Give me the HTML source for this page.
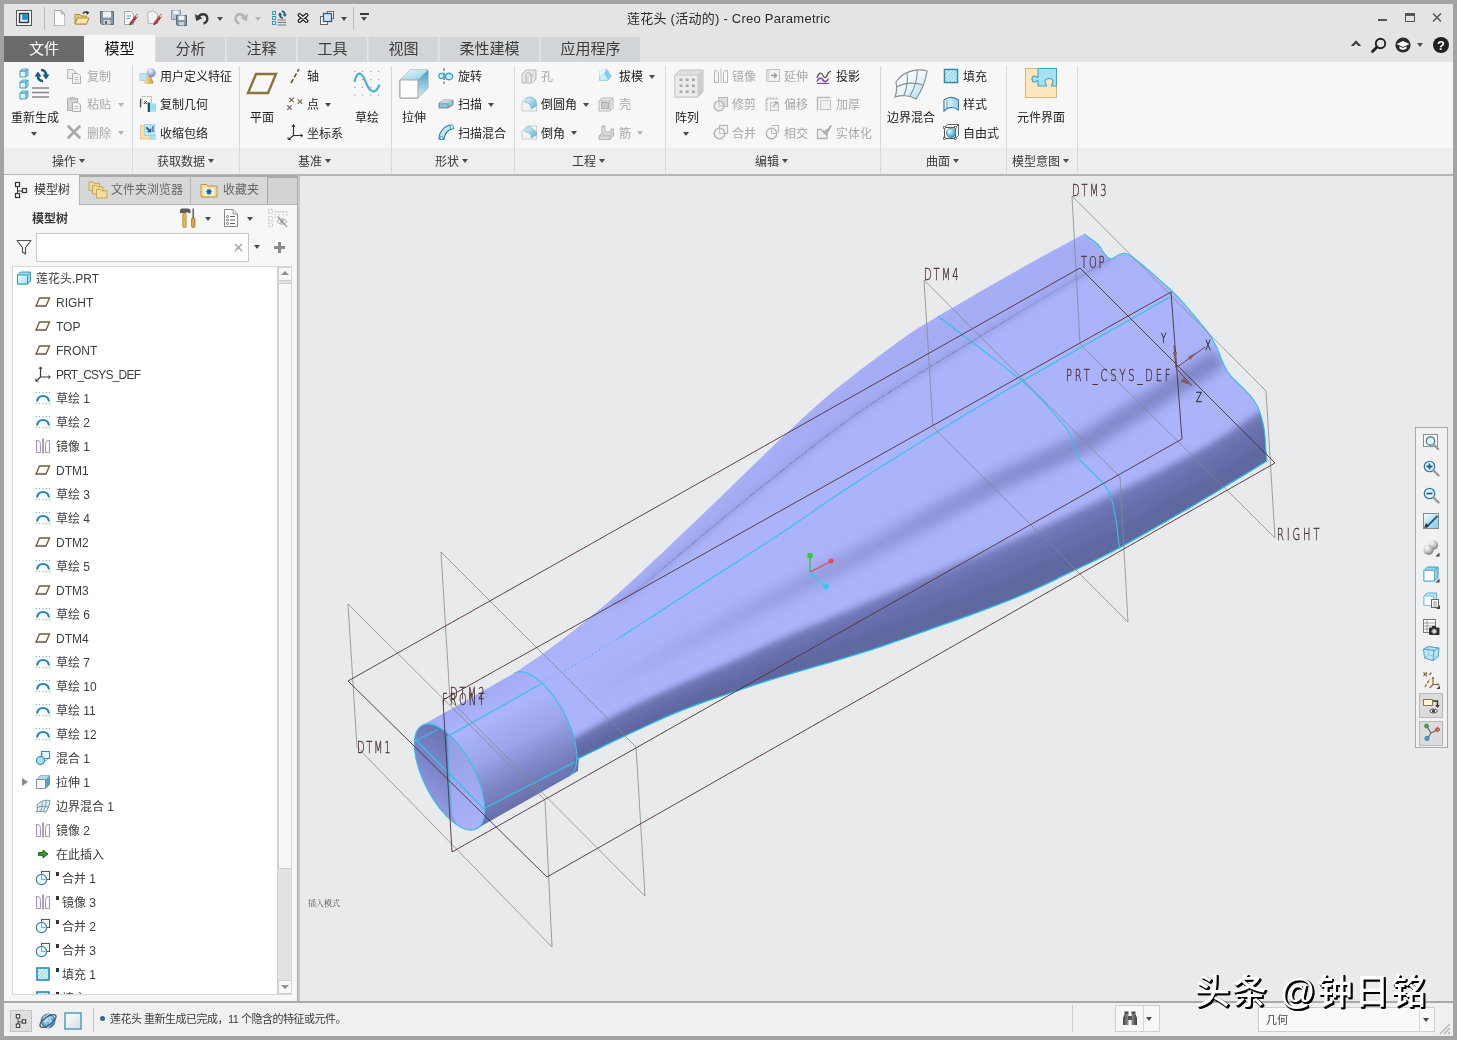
<!DOCTYPE html><html lang="zh"><head><meta charset="utf-8"><title>莲花头 (活动的) - Creo Parametric</title><style>
*{box-sizing:border-box;margin:0;padding:0}
html,body{width:1457px;height:1040px;overflow:hidden;background:#a3a3a3}
#root{position:absolute;left:0;top:0;width:1457px;height:1040px;will-change:transform}
body{font-family:"Liberation Sans","Noto Sans CJK SC",sans-serif;font-size:12px;color:#1e1e1e;position:relative}
.abs,.t,.i{position:absolute}
.t{white-space:nowrap;line-height:16px;height:16px}
.dis{color:#a9a9a9}
.i svg{display:block}
#title{left:4px;top:4px;width:1449px;height:58px;background:#e4e4e4}
#ribbon{left:4px;top:62px;width:1449px;height:113px;background:#f7f7f7}
#riblab{left:4px;top:148px;width:1449px;height:26px;background:#eeeeef}
.sep{position:absolute;width:1px;background:#d9d9d9}
.tab{position:absolute;top:37px;height:25px;font-size:15px;line-height:24px;text-align:center;color:#3c3c3c;background:#d2d5d8}
.arr{position:absolute;width:0;height:0;border-left:3.500px solid transparent;border-right:3.500px solid transparent;border-top:4px solid #4a4a4a}
.arr.d{border-top-color:#b5b5b5}
#left{left:4px;top:175px;width:294px;height:826px;background:#f7f7f8}
#gfx{left:300px;top:176px;width:1153px;height:825px;background:#e9eaec;overflow:hidden}
#status{left:4px;top:1003px;width:1449px;height:33px;background:#f0f0f0}
.tr{position:absolute;left:0;height:24px;line-height:24px;font-size:12px;color:#3d3d3d;white-space:nowrap}
</style></head><body><div id="root">
<div id="title" class="abs"></div>
<div class="t" style="left:627px;top:11px;font-size:13px;letter-spacing:.25px;color:#2a2a2a">莲花头 (活动的) - Creo Parametric</div>
<div class="i" style="left:16px;top:10px;width:16px;height:16px;"><svg width="16" height="16" viewBox="0 0 16 16"><rect x=".5" y=".5" width="15" height="15" fill="#fff" stroke="#555"/><rect x="3.5" y="3.5" width="9" height="9" fill="#d8ecf8" stroke="#333" stroke-width="1.4"/><rect x="6.2" y="4.2" width="5.6" height="5.6" fill="#1b8fd0"/></svg></div>
<div class="sep" style="left:44px;top:7px;height:23px;background:#bdbdbd"></div>
<div class="i" style="left:51px;top:10px;width:16px;height:16px;"><svg width="16" height="16" viewBox="0 0 16 16"><path d="M3.5 .5H10L13.5 4V15.5H3.5Z" fill="#fcfcfc" stroke="#a9a9a9"/><path d="M10 .5V4H13.5Z" fill="#d0d0d0" stroke="#a0a0a0" stroke-width=".7"/><path d="M13.5 6V15.5H6" stroke="#c4c4c4" fill="none"/></svg></div>
<div class="i" style="left:74px;top:10px;width:16px;height:16px;"><svg width="16" height="16" viewBox="0 0 16 16"><path d="M1 4.5H6L7.5 6H12.5V14H1Z" fill="#e7c476" stroke="#b58e3b"/><path d="M3.5 8H15L12.5 14H1Z" fill="#f8e3a8" stroke="#b58e3b"/><path d="M9 3.5C10.5 1.5 12.5 1.5 13.5 3" stroke="#333" stroke-width="1.4" fill="none"/><path d="M12 1L15.5 2.2L13 5Z" fill="#333"/></svg></div>
<div class="i" style="left:99px;top:10px;width:16px;height:16px;"><svg width="16" height="16" viewBox="0 0 16 16"><path d="M1.5 1.5H14.5V14.5H3L1.5 13Z" fill="#8697a3" stroke="#5a6a76"/><rect x="4" y="1.5" width="8" height="6" fill="#eef2f5"/><rect x="4.5" y="10" width="7" height="4.5" fill="#c9d2d8"/><rect x="6" y="11" width="2" height="3" fill="#5a6a76"/></svg></div>
<div class="i" style="left:122px;top:10px;width:16px;height:16px;"><svg width="16" height="16" viewBox="0 0 16 16"><path d="M2.5 1.5H9L11.5 4V14.5H2.5Z" fill="#fafafa" stroke="#a9a9a9"/><path d="M4.5 6H9M4.5 8.5H8" stroke="#4aa3c7"/><path d="M15 4L8.5 12L7.5 15L10.5 13.5L16 6Z" fill="#b5443a" stroke="#7d2c25" stroke-width=".6"/><path d="M15 4L16 6L14.5 7.5L13.5 5.8Z" fill="#d9d9d9"/></svg></div>
<div class="i" style="left:146px;top:10px;width:16px;height:16px;"><svg width="16" height="16" viewBox="0 0 16 16"><path d="M1.5 2.5L7 1L11.5 4V13.5H2.5Z" fill="#f4f4f4" stroke="#b5b5b5"/><path d="M15 4L8.5 12L7.5 15L10.5 13.5L16 6Z" fill="#b5443a" stroke="#7d2c25" stroke-width=".6"/><path d="M15 4L16 6L14.5 7.5L13.5 5.8Z" fill="#d9d9d9"/></svg></div>
<div class="i" style="left:171px;top:10px;width:16px;height:16px;"><svg width="16" height="16" viewBox="0 0 16 16"><path d="M.5 .5H9.5V9.5H.5Z" fill="#b9c3ca" stroke="#8c99a3"/><rect x="2.5" y=".5" width="5" height="3.5" fill="#f1f4f6"/><path d="M5.5 5.5H15.5V15.5H6.5L5.5 14.5Z" fill="#8697a3" stroke="#5a6a76"/><rect x="7.5" y="5.5" width="6" height="4.5" fill="#eef2f5"/><rect x="8" y="12" width="5" height="3.5" fill="#c9d2d8"/></svg></div>
<div class="i" style="left:194px;top:10px;width:16px;height:16px;"><svg width="16" height="16" viewBox="0 0 16 16"><path d="M4.5 7.5C6 3.5 12 3 13.2 7.5C14 10.5 12 13 9.5 13.5" stroke="#3a3a3a" stroke-width="2.4" fill="none"/><path d="M1 4L2.2 11L8.5 8.2Z" fill="#3a3a3a"/></svg></div>
<div class="arr" style="left:217px;top:17px"></div>
<div class="i" style="left:233px;top:10px;width:16px;height:16px;"><svg width="16" height="16" viewBox="0 0 16 16"><path d="M11.5 7.5C10 3.5 4 3 2.8 7.5C2 10.5 4 13 6.5 13.5" stroke="#b4b4b4" stroke-width="2.4" fill="none"/><path d="M15 4L13.8 11L7.5 8.2Z" fill="#b4b4b4"/></svg></div>
<div class="arr d" style="left:255px;top:17px"></div>
<div class="i" style="left:271px;top:10px;width:16px;height:16px;"><svg width="16" height="16" viewBox="0 0 16 16"><rect x="1.500" y="1.500" width="3" height="3" fill="#d6eef8" stroke="#3a9cc4"/><rect x="1.500" y="6.500" width="3" height="3" fill="#d6eef8" stroke="#3a9cc4"/><rect x="1.500" y="11.500" width="3" height="3" fill="#d6eef8" stroke="#3a9cc4"/><path d="M6.500 10H15M6.500 12.500H15M6.500 15H15" stroke="#777"/><g transform="translate(6 .2) scale(.6)" fill="#1b5a7c"><path d="M1.500 8.400H8.500L5 3.600Z"/><path d="M9.500 6.600H16.500L13 11.400Z"/><path d="M5 8A4.600 4.600 0 0 0 10 13" fill="none" stroke="#1b5a7c" stroke-width="2.800"/><path d="M13 7A4.600 4.600 0 0 0 8 2" fill="none" stroke="#1b5a7c" stroke-width="2.800"/></g></svg></div>
<div class="i" style="left:295px;top:10px;width:16px;height:16px;"><svg width="16" height="16" viewBox="0 0 16 16"><g stroke-linecap="round"><path d="M4.500 5L11.500 11M11.500 5L4.500 11" stroke="#1e1e1e" stroke-width="4"/><path d="M4.500 5L11.500 11M11.500 5L4.500 11" stroke="#fff" stroke-width="1.600"/></g></svg></div>
<div class="i" style="left:319px;top:10px;width:16px;height:16px;"><svg width="16" height="16" viewBox="0 0 16 16"><rect x="1.5" y="6.5" width="7" height="8" fill="#fff" stroke="#666"/><rect x="8.5" y="1.5" width="6" height="7" fill="#fff" stroke="#666"/><rect x="4.5" y="3.5" width="8" height="8" fill="#cfe6f2" stroke="#355f78" stroke-width="1.3"/></svg></div>
<div class="arr" style="left:341px;top:17px"></div>
<div class="sep" style="left:353px;top:7px;height:23px;background:#bdbdbd"></div>
<div class="abs" style="left:360px;top:13px;width:9px;height:2px;background:#3a3a3a"></div>
<div class="arr" style="left:360.5px;top:17px"></div>
<div class="abs" style="left:1378px;top:19px;width:9px;height:2px;background:#555"></div>
<div class="abs" style="left:1405px;top:13px;width:10px;height:9px;border:1px solid #555;border-top-width:3px"></div>
<svg class="abs" style="left:1432px;top:12px" width="11" height="11"><path d="M1 1.500L9 9.500M9 1.500L1 9.500" stroke="#555" stroke-width="1.500"/></svg>
<div class="i" style="left:1350px;top:37px;width:12px;height:12px;"><svg width="12" height="12" viewBox="0 0 12 12"><path d="M.8 9L6 3.200L11.200 9H8.300L6 6.400L3.700 9Z" fill="#3a3a3a"/></svg></div>
<div class="i" style="left:1370px;top:36px;width:18px;height:18px;"><svg width="18" height="18" viewBox="0 0 18 18"><circle cx="10.500" cy="7.500" r="4.700" fill="#e6e6e6" stroke="#222" stroke-width="1.900"/><path d="M7 11L2.5 15.5" stroke="#222" stroke-width="2.8" stroke-linecap="round"/></svg></div>
<div class="i" style="left:1394px;top:36px;width:18px;height:18px;"><svg width="18" height="18" viewBox="0 0 18 18"><circle cx="9" cy="9" r="7.6" fill="#2b2b2b"/><path d="M2.5 8L9 5L15.5 8L9 11Z" fill="#fff"/><path d="M5.5 10.2V12.5C7.5 14.2 10.5 14.2 12.5 12.5V10.2L9 12Z" fill="#fff"/></svg></div>
<div class="arr" style="left:1417px;top:43px"></div>
<div class="i" style="left:1432px;top:36px;width:18px;height:18px;"><svg width="18" height="18" viewBox="0 0 18 18"><circle cx="9" cy="9" r="8" fill="#1f1f1f"/><text x="9" y="13.6" font-family="Liberation Sans,sans-serif" font-size="13" font-weight="bold" fill="#fff" text-anchor="middle">?</text></svg></div>
<div class="tab" style="left:4px;width:80px;background:#6b6b6b;color:#fff;top:36px;height:26px;line-height:26px">文件</div>
<div class="tab" style="left:84px;width:71px;background:#f7f7f7;color:#111;top:35px;height:28px;line-height:27px">模型</div>
<div class="tab" style="left:155px;width:70px;border-left:1px solid #dcdee0">分析</div>
<div class="tab" style="left:226px;width:70px;border-left:1px solid #dcdee0">注释</div>
<div class="tab" style="left:297px;width:70px;border-left:1px solid #dcdee0">工具</div>
<div class="tab" style="left:368px;width:70px;border-left:1px solid #dcdee0">视图</div>
<div class="tab" style="left:439px;width:100px;border-left:1px solid #dcdee0">柔性建模</div>
<div class="tab" style="left:540px;width:100px;border-left:1px solid #dcdee0">应用程序</div>
<div id="ribbon" class="abs"></div><div id="riblab" class="abs"></div>
<div class="sep" style="left:132px;top:66px;height:107px"></div>
<div class="sep" style="left:239px;top:66px;height:107px"></div>
<div class="sep" style="left:391px;top:66px;height:107px"></div>
<div class="sep" style="left:514px;top:66px;height:107px"></div>
<div class="sep" style="left:665px;top:66px;height:107px"></div>
<div class="sep" style="left:880px;top:66px;height:107px"></div>
<div class="sep" style="left:1006px;top:66px;height:107px"></div>
<div class="sep" style="left:1077px;top:66px;height:107px"></div>
<div class="t " style="left:52px;top:154px;color:#3a3a3a">操作</div>
<div class="arr" style="left:78.5px;top:159px"></div>
<div class="t " style="left:157px;top:154px;color:#3a3a3a">获取数据</div>
<div class="arr" style="left:207.5px;top:159px"></div>
<div class="t " style="left:298px;top:154px;color:#3a3a3a">基准</div>
<div class="arr" style="left:324.5px;top:159px"></div>
<div class="t " style="left:435px;top:154px;color:#3a3a3a">形状</div>
<div class="arr" style="left:461.5px;top:159px"></div>
<div class="t " style="left:572px;top:154px;color:#3a3a3a">工程</div>
<div class="arr" style="left:598.5px;top:159px"></div>
<div class="t " style="left:755px;top:154px;color:#3a3a3a">编辑</div>
<div class="arr" style="left:781.5px;top:159px"></div>
<div class="t " style="left:926px;top:154px;color:#3a3a3a">曲面</div>
<div class="arr" style="left:952.5px;top:159px"></div>
<div class="t " style="left:1012px;top:154px;color:#3a3a3a">模型意图</div>
<div class="arr" style="left:1062.5px;top:159px"></div>
<div class="i" style="left:17px;top:66px;width:40px;height:36px;"><svg width="40" height="36" viewBox="0 0 40 36"><path d="M3 5h6v6h-6z" fill="#e8f6fc" stroke="#3a9cc4"/><path d="M3 5l2-2h6l-2 2zM9 5l2-2v6l-2 2z" fill="#9fd8ee" stroke="#3a9cc4" stroke-width=".8"/><path d="M3 16h6v6h-6z" fill="#e8f6fc" stroke="#3a9cc4"/><path d="M3 16l2-2h6l-2 2zM9 16l2-2v6l-2 2z" fill="#9fd8ee" stroke="#3a9cc4" stroke-width=".8"/><path d="M3 27h6v6h-6z" fill="#e8f6fc" stroke="#3a9cc4"/><path d="M3 27l2-2h6l-2 2zM9 27l2-2v6l-2 2z" fill="#9fd8ee" stroke="#3a9cc4" stroke-width=".8"/><path d="M15 22H32M15 26.5H32M15 31H32" stroke="#888" stroke-width="1.6"/><g transform="translate(16 2)" fill="#1b5a7c"><path d="M1.500 8.400H8.500L5 3.600Z"/><path d="M9.500 6.600H16.500L13 11.400Z"/><path d="M5 8A4.600 4.600 0 0 0 10 13" fill="none" stroke="#1b5a7c" stroke-width="2.600"/><path d="M13 7A4.600 4.600 0 0 0 8 2" fill="none" stroke="#1b5a7c" stroke-width="2.600"/></g></svg></div>
<div class="t " style="left:11px;top:110px;">重新生成</div>
<div class="arr" style="left:31px;top:132px"></div>
<div class="i" style="left:66px;top:68px;width:16px;height:16px;"><svg width="16" height="16" viewBox="0 0 16 16"><path d="M1.5 1.5H7L9.5 4V10.5H1.5Z" fill="#ededed" stroke="#b5b5b5"/><path d="M6.5 5.5H12L14.5 8V15.5H6.5Z" fill="#f4f4f4" stroke="#b0b0b0"/><path d="M8.5 9.5H12.5M8.5 11.5H12.5M8.5 13.5H12.5" stroke="#c4c4c4"/></svg></div>
<div class="t dis" style="left:87px;top:69px;">复制</div>
<div class="i" style="left:66px;top:96px;width:16px;height:16px;"><svg width="16" height="16" viewBox="0 0 16 16"><rect x="1.5" y="2.5" width="10" height="12" fill="#d4d4d4" stroke="#b0b0b0"/><rect x="4" y="1" width="5" height="3" fill="#c2c2c2"/><path d="M6.5 6.5H12L14.5 9V15.5H6.5Z" fill="#f4f4f4" stroke="#b0b0b0"/><path d="M8.5 10.5H12.5M8.5 12.5H12.5" stroke="#c4c4c4"/></svg></div>
<div class="t dis" style="left:87px;top:97px;">粘贴</div>
<div class="arr d" style="left:118px;top:103px"></div>
<div class="i" style="left:66px;top:124px;width:16px;height:16px;"><svg width="16" height="16" viewBox="0 0 16 16"><path d="M2.5 2.5L13.5 13.5M13.5 2.5L2.5 13.5" stroke="#a8a8a8" stroke-width="2.6" stroke-linecap="round"/></svg></div>
<div class="t dis" style="left:87px;top:126px;">删除</div>
<div class="arr d" style="left:118px;top:131px"></div>
<div class="i" style="left:139px;top:68px;width:17px;height:16px;"><svg width="17" height="16" viewBox="0 0 17 16"><defs><radialGradient id="gs" cx=".4" cy=".3" r=".75"><stop offset="0" stop-color="#f4f6fc"/><stop offset=".55" stop-color="#a9b3d8"/><stop offset="1" stop-color="#6f7fb5"/></radialGradient><linearGradient id="gcone" x1="0" y1="0" x2="1" y2="0"><stop offset="0" stop-color="#f2dc9a"/><stop offset=".5" stop-color="#e3c470"/><stop offset="1" stop-color="#b8923e"/></linearGradient></defs><rect x="1" y="5.700" width="6.500" height="6.800" fill="#bfe6f7" stroke="#8fd0ee" stroke-width=".8"/><path d="M4.600 15C6.500 12 8.500 9 9.600 5.500H11.400C12.500 9 13.500 12 14.600 15C12 16.300 7 16.300 4.600 15Z" fill="url(#gcone)"/><circle cx="12.200" cy="4.700" r="4.500" fill="url(#gs)"/></svg></div>
<div class="t " style="left:160px;top:69px;">用户定义特征</div>
<div class="i" style="left:139px;top:96px;width:17px;height:16px;"><svg width="17" height="16" viewBox="0 0 17 16"><rect x="3" y=".5" width="9.500" height="6.500" fill="#fbfbfb" stroke="#b9b9b9" stroke-width=".8"/><rect x=".9" y="2.800" width="1.300" height="8.600" fill="#4a4a4a"/><path d="M5.200 5.300l2.600 2.600m0-2.600l-2.600 2.600" stroke="#333" stroke-width="1"/><rect x="11" y="7.500" width="6" height="8.200" fill="#9fdcf2"/><rect x="8.700" y="6.700" width="2.300" height="9.300" fill="#0e5a63"/></svg></div>
<div class="t " style="left:160px;top:97px;">复制几何</div>
<div class="i" style="left:139px;top:124px;width:17px;height:16px;"><svg width="17" height="16" viewBox="0 0 17 16"><rect x="1.400" y="1.500" width="9.500" height="13.500" fill="#f9e3ac" stroke="#e0c079" stroke-width=".8"/><rect x="11" y="10.700" width="6" height="5.300" fill="#a9e0f4"/><rect x="5.300" y=".5" width="10.500" height="10.800" fill="#bfe8f7" stroke="#8fd0ea" stroke-width=".8"/><path d="M7.300 3.300L11.200 7.200" stroke="#1d5c85" stroke-width="1.700"/><path d="M12.300 4V8.300H8Z" fill="#1d5c85"/><rect x="13.300" y="2" width="1.300" height="6" fill="#2a6f96"/></svg></div>
<div class="t " style="left:160px;top:126px;">收缩包络</div>
<div class="i" style="left:246px;top:68px;width:32px;height:30px;"><svg width="32" height="30" viewBox="0 0 32 30"><path d="M10 6H30L22 25H2Z" fill="none" stroke="#8d7438" stroke-width="2.400" stroke-linejoin="miter"/></svg></div>
<div class="t " style="left:250px;top:110px;">平面</div>
<div class="i" style="left:287px;top:68px;width:16px;height:16px;"><svg width="16" height="16" viewBox="0 0 16 16"><path d="M4 15L12 1" stroke="#6b5530" stroke-width="1.6" stroke-dasharray="4.5 2"/></svg></div>
<div class="t " style="left:307px;top:69px;">轴</div>
<div class="i" style="left:287px;top:96px;width:16px;height:16px;"><svg width="16" height="16" viewBox="0 0 16 16"><path d="M2.4 1.7l4.400 4.400m0-4.400l-4.400 4.400" stroke="#7d6f5a" stroke-width="1.300" fill="none"/><path d="M10.7 3.4l4.400 4.400m0-4.400l-4.400 4.400" stroke="#7d6f5a" stroke-width="1.300" fill="none"/><path d="M0.3 9.4l4.400 4.400m0-4.400l-4.400 4.400" stroke="#7d6f5a" stroke-width="1.300" fill="none"/></svg></div>
<div class="t " style="left:307px;top:97px;">点</div>
<div class="arr" style="left:325px;top:103px"></div>
<div class="i" style="left:287px;top:124px;width:16px;height:16px;"><svg width="16" height="16" viewBox="0 0 16 16"><path d="M6.5 1V11.5H15.5M6.5 11.5L1.5 15.5" stroke="#333" stroke-width="1.2" fill="none"/><path d="M5 3L6.5 .5L8 3M13.5 10L15.8 11.5L13.5 13M1 13L1.2 15.8L4 15.5" stroke="#333" fill="none" stroke-width="1"/></svg></div>
<div class="t " style="left:307px;top:126px;">坐标系</div>
<div class="i" style="left:351px;top:66px;width:32px;height:34px;"><svg width="32" height="34" viewBox="0 0 32 34"><g fill="#8f8f8f"><rect x="3.3" y="4.8" width="1.100" height="1.100"/><rect x="3.3" y="13.1" width="1.100" height="1.100"/><rect x="3.3" y="20.8" width="1.100" height="1.100"/><rect x="3.3" y="28.5" width="1.100" height="1.100"/><rect x="11" y="4.8" width="1.100" height="1.100"/><rect x="11" y="13.1" width="1.100" height="1.100"/><rect x="11" y="20.8" width="1.100" height="1.100"/><rect x="11" y="28.5" width="1.100" height="1.100"/><rect x="19.3" y="4.8" width="1.100" height="1.100"/><rect x="19.3" y="13.1" width="1.100" height="1.100"/><rect x="19.3" y="20.8" width="1.100" height="1.100"/><rect x="19.3" y="28.5" width="1.100" height="1.100"/><rect x="27" y="4.8" width="1.100" height="1.100"/><rect x="27" y="13.1" width="1.100" height="1.100"/><rect x="27" y="20.8" width="1.100" height="1.100"/><rect x="27" y="28.5" width="1.100" height="1.100"/></g><path d="M3.500 16C6 5 10.500 5 14.500 15.500S24 30 28.500 18.500" stroke="#4fb0d2" stroke-width="2.200" fill="none"/></svg></div>
<div class="t " style="left:355px;top:110px;">草绘</div>
<div class="i" style="left:397px;top:67px;width:34px;height:36px;"><svg width="34" height="36" viewBox="0 0 34 36"><defs><linearGradient id="ge1" x1="0" y1="0" x2="1" y2="1"><stop offset="0" stop-color="#e8f6fb"/><stop offset="1" stop-color="#8fcde3"/></linearGradient><linearGradient id="ge2" x1="0" y1="0" x2="0" y2="1"><stop offset="0" stop-color="#3f9cc2"/><stop offset="1" stop-color="#d8eef6"/></linearGradient></defs><path d="M3 13L13 3H31V21L21 31H3Z" fill="#fff" stroke="#9c9c9c"/><path d="M3 13L13 3H31L21 13Z" fill="url(#ge1)"/><path d="M21 13L31 3V21L21 31Z" fill="url(#ge2)"/><path d="M3 13H21V31H3Z" fill="#fdfdfd" stroke="#a5a5a5"/><path d="M21 13L31 3" stroke="#7fb8cf"/></svg></div>
<div class="t " style="left:402px;top:110px;">拉伸</div>
<div class="i" style="left:438px;top:68px;width:16px;height:16px;"><svg width="16" height="16" viewBox="0 0 16 16"><path d="M6 0V16" stroke="#555" stroke-dasharray="3 1.5"/><ellipse cx="3.5" cy="8" rx="2.6" ry="2.6" fill="#d9f1f9" stroke="#3a9cc4" stroke-width="1.2"/><ellipse cx="11" cy="8.5" rx="3.6" ry="3.3" fill="#c8ebf7" stroke="#3a9cc4" stroke-width="1.4"/><path d="M6 8H8" stroke="#3a9cc4"/></svg></div>
<div class="t " style="left:458px;top:69px;">旋转</div>
<div class="i" style="left:438px;top:96px;width:16px;height:16px;"><svg width="16" height="16" viewBox="0 0 16 16"><path d="M1 7L6 4H15V9L10 12H1Z" fill="#8ea6ad" stroke="#6d858c" stroke-width=".8"/><path d="M1 7L6 4H15L10 7Z" fill="#c6d6da"/><path d="M2 8.5H9V11H2Z" fill="#7fd0ea"/><ellipse cx="12.5" cy="7.5" rx="1.8" ry="2.3" fill="#7fd0ea"/></svg></div>
<div class="t " style="left:458px;top:97px;">扫描</div>
<div class="arr" style="left:488px;top:103px"></div>
<div class="i" style="left:438px;top:124px;width:16px;height:16px;"><svg width="16" height="16" viewBox="0 0 16 16"><path d="M1 15C1 8 6 2 13 1L15.5 4.5C10 5.5 6.5 9.5 6 15.5Z" fill="#bfe6f5" stroke="#2f7fae" stroke-width="1.1"/><ellipse cx="13.8" cy="3" rx="1.6" ry="2.2" fill="#eaf7fc" stroke="#2f7fae" stroke-width=".8"/><circle cx="3.5" cy="14" r="1.6" fill="#fff" stroke="#2f7fae" stroke-width=".8"/></svg></div>
<div class="t " style="left:458px;top:126px;">扫描混合</div>
<div class="i" style="left:521px;top:68px;width:16px;height:16px;"><svg width="16" height="16" viewBox="0 0 16 16"><path d="M1 6L5 2H15V11L11 15H1Z" fill="#e6e6e6" stroke="#b9b9b9"/><path d="M5 14V7C5 4 10 4 10 7V14" fill="#f6f6f6" stroke="#ababab"/><path d="M7 14V8C7 6.5 12 5 12 8" fill="none" stroke="#bdbdbd"/></svg></div>
<div class="t dis" style="left:541px;top:69px;">孔</div>
<div class="i" style="left:521px;top:96px;width:16px;height:16px;"><svg width="16" height="16" viewBox="0 0 16 16"><defs><linearGradient id="gr1" x1="0" y1="0" x2="1" y2="1"><stop offset="0" stop-color="#e4f5fb"/><stop offset="1" stop-color="#5db5d8"/></linearGradient></defs><path d="M1 7C1 3 5 1 9 1C13 1 15.5 4 15.5 8V15H1Z" fill="#f3f3f3" stroke="#c0c0c0" stroke-width=".8"/><path d="M3 6C5 2 9 .5 12 2C15 3.5 15.5 7 15.5 10L10 13C10 9 8 6.5 3 6Z" fill="url(#gr1)" stroke="#5fb4d4" stroke-width=".6"/></svg></div>
<div class="t " style="left:541px;top:97px;">倒圆角</div>
<div class="arr" style="left:583px;top:103px"></div>
<div class="i" style="left:521px;top:124px;width:16px;height:16px;"><svg width="16" height="16" viewBox="0 0 16 16"><defs><linearGradient id="gc1" x1="0" y1="0" x2="1" y2="1"><stop offset="0" stop-color="#e4f5fb"/><stop offset="1" stop-color="#5db5d8"/></linearGradient></defs><path d="M1 7L6 2H15.5V15H1Z" fill="#f3f3f3" stroke="#c0c0c0" stroke-width=".8"/><path d="M3 7L8 2L15.5 8V11L10 14V10Z" fill="url(#gc1)" stroke="#5fb4d4" stroke-width=".6"/></svg></div>
<div class="t " style="left:541px;top:126px;">倒角</div>
<div class="arr" style="left:571px;top:131px"></div>
<div class="i" style="left:598px;top:68px;width:16px;height:16px;"><svg width="16" height="16" viewBox="0 0 16 16"><path d="M1.500 3.500L8.500 1L13.500 8L10 12.500H1.500Z" fill="#c9ecf8" stroke="#8fd0e8" stroke-width=".8"/><path d="M8.500 1L13.500 8L10 12.500L6 5Z" fill="#84d0ec"/><path d="M1.500 3.500L8.500 1L6 5L1.500 7Z" fill="#eef9fd"/></svg></div>
<div class="t " style="left:619px;top:69px;">拔模</div>
<div class="arr" style="left:649px;top:75px"></div>
<div class="i" style="left:598px;top:96px;width:16px;height:16px;"><svg width="16" height="16" viewBox="0 0 16 16"><path d="M1 5L4 2H15V12L12 15H1Z" fill="#e9e9e9" stroke="#b9b9b9"/><rect x="3.5" y="6.5" width="7" height="6" fill="#c9c9c9" stroke="#b0b0b0"/><path d="M1 5H12V15M12 5L15 2" stroke="#b9b9b9" fill="none"/></svg></div>
<div class="t dis" style="left:619px;top:97px;">壳</div>
<div class="i" style="left:598px;top:124px;width:16px;height:16px;"><svg width="16" height="16" viewBox="0 0 16 16"><path d="M1 12L4 9V2H7V8H13V5H15.5V12L12 15.5H1Z" fill="#dcdcdc" stroke="#b3b3b3"/><path d="M1 12H12V15.5M12 12L15.5 9" stroke="#b3b3b3" fill="none"/><path d="M4 9L7 11.5H12" stroke="#c2c2c2" fill="none"/></svg></div>
<div class="t dis" style="left:619px;top:126px;">筋</div>
<div class="arr d" style="left:637px;top:131px"></div>
<div class="i" style="left:672.5px;top:66px;width:32px;height:36px;"><svg width="32" height="36" viewBox="0 0 32 36"><path d="M2 9L7 4H30V26L25 31H2Z" fill="#dedede" stroke="#c4c4c4"/><path d="M2 9H25V31H2Z" fill="#ececec" stroke="#c9c9c9"/><path d="M25 9L30 4V26L25 31Z" fill="#cdcdcd"/><rect x="6.5" y="12.5" width="3" height="2.600" fill="#a9a9a9"/><rect x="12.7" y="12.5" width="3" height="2.600" fill="#a9a9a9"/><rect x="18.9" y="12.5" width="3" height="2.600" fill="#a9a9a9"/><rect x="6.5" y="18.5" width="3" height="2.600" fill="#a9a9a9"/><rect x="12.7" y="18.5" width="3" height="2.600" fill="#a9a9a9"/><rect x="18.9" y="18.5" width="3" height="2.600" fill="#a9a9a9"/><rect x="6.5" y="24.5" width="3" height="2.600" fill="#a9a9a9"/><rect x="12.7" y="24.5" width="3" height="2.600" fill="#a9a9a9"/><rect x="18.9" y="24.5" width="3" height="2.600" fill="#a9a9a9"/></svg></div>
<div class="t " style="left:675px;top:110px;">阵列</div>
<div class="arr" style="left:683px;top:132px"></div>
<div class="i" style="left:713px;top:68px;width:16px;height:16px;"><svg width="16" height="16" viewBox="0 0 16 16"><path d="M8 .5V15.500" stroke="#bdbdbd"/><path d="M1.500 2.500H3C5.500 2.500 5.500 6 5.500 8V14.500H1.500Z" fill="#f4f4f4" stroke="#b5b5b5"/><path d="M14.500 2.500H13C10.500 2.500 10.500 6 10.500 8V14.500H14.500Z" fill="#fbf9fd" stroke="#b5b5b5"/></svg></div>
<div class="t dis" style="left:732px;top:69px;">镜像</div>
<div class="i" style="left:713px;top:96px;width:16px;height:16px;"><svg width="16" height="16" viewBox="0 0 16 16"><rect x="5.5" y="1.5" width="9" height="9" fill="#dedede" stroke="#b5b5b5"/><circle cx="6" cy="10" r="5" fill="#ececec" stroke="#b0b0b0" stroke-width="1.2"/><path d="M6 5V10H11" stroke="#c6c6c6" fill="none"/></svg></div>
<div class="t dis" style="left:732px;top:97px;">修剪</div>
<div class="i" style="left:713px;top:124px;width:16px;height:16px;"><svg width="16" height="16" viewBox="0 0 16 16"><rect x="6.5" y="1.5" width="8" height="8" fill="#f2f2f2" stroke="#b5b5b5" stroke-width="1.2"/><circle cx="6.5" cy="9.5" r="5.3" fill="#f2f2f2" stroke="#b0b0b0" stroke-width="1.3"/><path d="M6.5 4.5V9.5H11.5" stroke="#c6c6c6" fill="none"/></svg></div>
<div class="t dis" style="left:732px;top:126px;">合并</div>
<div class="i" style="left:765px;top:68px;width:16px;height:16px;"><svg width="16" height="16" viewBox="0 0 16 16"><rect x="1.5" y="1.5" width="13" height="12" fill="#f1f1f1" stroke="#c0c0c0"/><rect x="1.5" y="1.5" width="3" height="12" fill="#dcdcdc"/><path d="M6 7.5H11M9 5L11.5 7.5L9 10" stroke="#9a9a9a" stroke-width="1.3" fill="none"/></svg></div>
<div class="t dis" style="left:784px;top:69px;">延伸</div>
<div class="i" style="left:765px;top:96px;width:16px;height:16px;"><svg width="16" height="16" viewBox="0 0 16 16"><path d="M1.5 14.5V2.5H13.5" stroke="#b9b9b9" stroke-width="2" fill="none" stroke-dasharray="2 1"/><path d="M5.5 14.5V6.5H13.5V14.5Z" fill="#ececec" stroke="#c2c2c2"/><path d="M8 11L12 6M9.5 6H12V8.5" stroke="#a5a5a5" stroke-width="1.2" fill="none"/></svg></div>
<div class="t dis" style="left:784px;top:97px;">偏移</div>
<div class="i" style="left:765px;top:124px;width:16px;height:16px;"><svg width="16" height="16" viewBox="0 0 16 16"><path d="M6.5 1.5H13.5V8.5" fill="none" stroke="#b9b9b9" stroke-width="1.2"/><circle cx="6.5" cy="9.5" r="5.3" fill="#f4f4f4" stroke="#b0b0b0" stroke-width="1.3"/><path d="M6.5 4.5V9.5H11.5" stroke="#bcbcbc" fill="none"/></svg></div>
<div class="t dis" style="left:784px;top:126px;">相交</div>
<div class="i" style="left:816px;top:68px;width:16px;height:16px;"><svg width="16" height="16" viewBox="0 0 16 16"><path d="M1 10C3 4 5.5 4 7 7.5S11 10 12 5L15 3" stroke="#555" stroke-width="1.3" fill="none"/><path d="M1 13.5C3 9.5 5.5 9.5 7 12S11 14 12.5 10.5" stroke="#7b3fa0" stroke-width="1.5" fill="none"/><path d="M1 15.5H13" stroke="#7b3fa0" stroke-width="1.2"/></svg></div>
<div class="t " style="left:836px;top:69px;">投影</div>
<div class="i" style="left:816px;top:96px;width:16px;height:16px;"><svg width="16" height="16" viewBox="0 0 16 16"><path d="M1.5 14.5V1.5H14.5" stroke="#b5b5b5" stroke-width="1.4" fill="none"/><path d="M4.500 14.5V4.5H14.5M4.500 12H12" stroke="#c6c6c6" fill="none"/><rect x="4.5" y="4.5" width="10" height="9" fill="#f1f1f1" stroke="#c6c6c6"/></svg></div>
<div class="t dis" style="left:836px;top:97px;">加厚</div>
<div class="i" style="left:816px;top:124px;width:16px;height:16px;"><svg width="16" height="16" viewBox="0 0 16 16"><path d="M1.5 5.500H5L8 8L11 5.5V14.5H1.5Z" fill="#f1f1f1" stroke="#b0b0b0" stroke-width="1.3"/><path d="M7 7L10 10L15 1.5" stroke="#a8a8a8" stroke-width="2" fill="none"/></svg></div>
<div class="t dis" style="left:836px;top:126px;">实体化</div>
<div class="i" style="left:892px;top:66px;width:38px;height:36px;"><svg width="38" height="36" viewBox="0 0 38 36"><defs><linearGradient id="gb1" x1="0" y1="0" x2="1" y2="1"><stop offset="0" stop-color="#ffffff"/><stop offset=".5" stop-color="#eaf7fc"/><stop offset="1" stop-color="#9fdcf0"/></linearGradient></defs><path d="M4 16C10 6 24 2 35 5C34 14 30 24 24 33C18 29 9 29 3 31C5 26 5 21 4 16Z" fill="url(#gb1)" stroke="#8e8e8e" stroke-width="1.2"/><path d="M15 7.500C16 14 15 22 12 29M4.500 21C12 17 22 16 31 19" stroke="#8e8e8e" fill="none" stroke-width="1.1"/><path d="M25 3.500C26 10 23 22 18 30" stroke="#8e8e8e" fill="none" stroke-width="1.1"/></svg></div>
<div class="t " style="left:887px;top:110px;">边界混合</div>
<div class="i" style="left:943px;top:68px;width:16px;height:16px;"><svg width="16" height="16" viewBox="0 0 16 16"><rect x="1.5" y="1.5" width="13" height="13" fill="#d6f0f9" stroke="#2f8db5" stroke-width="1.3"/><path d="M2 7L7 2M2 11L11 2M2 14.500L14.500 2M5.500 14.500L14.500 5.500M9.500 14.500L14.500 9.500" stroke="#8fd3ea" stroke-width="1.1"/><rect x="1.5" y="1.5" width="13" height="13" fill="none" stroke="#2f8db5" stroke-width="1.3"/></svg></div>
<div class="t " style="left:963px;top:69px;">填充</div>
<div class="i" style="left:943px;top:96px;width:16px;height:16px;"><svg width="16" height="16" viewBox="0 0 16 16"><defs><linearGradient id="gst" x1="0" y1="0" x2="1" y2="0"><stop offset="0" stop-color="#f4fbfe"/><stop offset="1" stop-color="#8fd0ea"/></linearGradient></defs><path d="M1 4C5 .5 11 .5 15.500 4V14C11 10.500 5 10.500 1 15Z" fill="url(#gst)" stroke="#3a83b0" stroke-width="1.2"/><path d="M4 13V4" stroke="#3a83b0" stroke-width=".8"/></svg></div>
<div class="t " style="left:963px;top:97px;">样式</div>
<div class="i" style="left:943px;top:124px;width:16px;height:16px;"><svg width="16" height="16" viewBox="0 0 16 16"><defs><radialGradient id="gfs" cx=".35" cy=".3" r=".8"><stop offset="0" stop-color="#eaf8fd"/><stop offset=".6" stop-color="#63bfe2"/><stop offset="1" stop-color="#2b7fb0"/></radialGradient></defs><rect x="1.5" y="3.5" width="11" height="11" fill="none" stroke="#555"/><path d="M1.500 3.500L4.500 .5H15.500V11.500L12.500 14.500M12.500 3.500L15.500 .5" stroke="#555" fill="none" stroke-width=".9"/><circle cx="8" cy="9" r="4.6" fill="url(#gfs)" stroke="#2b7fb0" stroke-width=".7"/><g fill="#fff" stroke="#444" stroke-width=".6"><rect x=".5" y="2.500" width="2" height="2"/><rect x="11.500" y="2.500" width="2" height="2"/><rect x=".5" y="13.500" width="2" height="2"/><rect x="11.500" y="13.500" width="2" height="2"/></g></svg></div>
<div class="t " style="left:963px;top:126px;">自由式</div>
<div class="i" style="left:1024px;top:67px;width:34px;height:32px;"><svg width="34" height="32" viewBox="0 0 34 32"><rect x="1.5" y="1.5" width="31" height="29" fill="#fbe6bd" stroke="#dcb572"/><path d="M14 1.5H32.500V19H27.500C27.500 17 29 16.500 29 14.500C29 12.500 27 11.500 25 11.500C23 11.500 21 12.500 21 14.500C21 16.500 22.500 17 22.500 19H14V13.500C12.500 13.500 12 15 10.500 15C9 15 8 13.500 8 12C8 10.500 9 9 10.500 9C12 9 12.500 10.500 14 10.500Z" fill="#a5e2f2" stroke="#3da5c9" stroke-width="1.1"/></svg></div>
<div class="t " style="left:1017px;top:110px;">元件界面</div>
<div class="abs" style="left:4px;top:174px;width:1449px;height:1.500px;background:#b6b6b6"></div>
<div id="left" class="abs">
<div class="abs" style="left:0;top:0;width:294px;height:30px;background:#d1d2d4;border-top:3px solid #a9abad;border-bottom:1px solid #b4b6b8"></div>
<div class="abs" style="left:0;top:0;width:75px;height:31px;background:#f7f7f8"></div>
<div class="abs" style="left:75px;top:2px;width:112px;height:28px;background:#d6d8da;border:1px solid #b4b6b8;border-top:none"></div>
<div class="abs" style="left:187px;top:2px;width:77px;height:28px;background:#d6d8da;border:1px solid #b4b6b8;border-left:none;border-top:none;border-right-color:#a4a6a8"></div>
</div>
<div class="i" style="left:14px;top:181px;width:14px;height:18px;"><svg width="14" height="18" viewBox="0 0 14 18"><path d="M3.500 5V15H6M3.500 10H9" stroke="#333" fill="none"/><rect x="1.500" y="1.500" width="4" height="4" fill="#fff" stroke="#333" stroke-width="1.2"/><rect x="1.500" y="12.500" width="4" height="4" fill="#fff" stroke="#333" stroke-width="1.2"/><rect x="8.500" y="7.500" width="4" height="4" fill="#fff" stroke="#333" stroke-width="1.2"/></svg></div>
<div class="t " style="left:34px;top:182px;color:#333">模型树</div>
<div class="i" style="left:88px;top:181px;width:20px;height:18px;"><svg width="20" height="18" viewBox="0 0 20 18"><path d="M1 1h4l1.2 1.300h5.300v7.200h-10.500z" fill="#f6dc96" stroke="#b9974a" stroke-width=".8"/><path d="M4.5 4.5h4l1.2 1.300h5.300v7.200h-10.500z" fill="#f6dc96" stroke="#b9974a" stroke-width=".8"/><path d="M8.5 8.5h4l1.2 1.300h5.300v7.200h-10.500z" fill="#f6dc96" stroke="#b9974a" stroke-width=".8"/></svg></div>
<div class="t " style="left:111px;top:182px;color:#666">文件夹浏览器</div>
<div class="i" style="left:200px;top:182px;width:18px;height:16px;"><svg width="18" height="16" viewBox="0 0 18 16"><path d="M1 2.500H6.500L8 4H17V15H1Z" fill="#f6dc96" stroke="#b9974a"/><rect x="4.500" y="6" width="9" height="7.500" fill="#fffef6"/><path d="M9 6.500V13M5.800 9.700H12.200M6.800 7.500L11.200 12M11.200 7.500L6.800 12" stroke="#1b5f9a" stroke-width="1.100"/></svg></div>
<div class="t " style="left:223px;top:182px;color:#666">收藏夹</div>
<div class="t " style="left:32px;top:211px;font-weight:bold;color:#3a3a3a">模型树</div>
<div class="i" style="left:179px;top:207px;width:18px;height:22px;"><svg width="18" height="22" viewBox="0 0 18 22"><path d="M1 3.500C1 2 2.500 1.500 4 1.500H9.500L11.500 3V6H9L8.500 5H7.500V6H1Z" fill="#5a5a5a"/><rect x="3.800" y="6" width="3.400" height="14.500" rx="1" fill="#e0b95a" stroke="#a8852f" stroke-width=".7"/><rect x="13.500" y="1.500" width="1.400" height="10" fill="#555"/><path d="M12.500 11.500H16V19.500C16 21 12.500 21 12.500 19.500Z" fill="#d8a540" stroke="#9a7426" stroke-width=".7"/></svg></div>
<div class="arr" style="left:205px;top:217px"></div>
<div class="i" style="left:223px;top:208px;width:16px;height:20px;"><svg width="16" height="20" viewBox="0 0 16 20"><path d="M1.500 1.500H10L14.500 6V18.500H1.500Z" fill="#fbfbfb" stroke="#8a8a8a"/><path d="M10 1.500V6H14.500" fill="#e2e2e2" stroke="#8a8a8a" stroke-width=".8"/><g stroke="#666"><path d="M7 8.500H12M7 12H12M7 15.500H12"/></g><g fill="none" stroke="#666" stroke-width=".8"><circle cx="4.500" cy="8.500" r="1"/><circle cx="4.500" cy="12" r="1"/><circle cx="4.500" cy="15.500" r="1"/></g></svg></div>
<div class="arr" style="left:247px;top:217px"></div>
<div class="i" style="left:267px;top:208px;width:22px;height:20px;"><svg width="22" height="20" viewBox="0 0 22 20"><g fill="none" stroke="#c4c4c4" stroke-dasharray="1.5 1"><rect x="1.500" y="1.500" width="4" height="4"/><rect x="1.500" y="8.500" width="4" height="4"/><rect x="1.500" y="15" width="4" height="4"/><path d="M8 3.500H20M8 3.500V10M12 3.500V10M16 3.500V8M20 3.500V8"/></g><path d="M10 13.500C13 10 17 10 20 13.500C17 17 13 17 10 13.500Z" fill="#f3f3f3" stroke="#9d9d9d"/><circle cx="15" cy="13.500" r="1.700" fill="#9d9d9d"/><path d="M10.500 8.500L20 19" stroke="#9d9d9d" stroke-width="1.2"/></svg></div>
<div class="i" style="left:16px;top:239px;width:16px;height:16px;"><svg width="16" height="16" viewBox="0 0 16 16"><path d="M1 1.500H15L9.500 8.500V15L6.500 13V8.500Z" fill="#fff" stroke="#555" stroke-width="1.2" stroke-linejoin="round"/></svg></div>
<div class="abs" style="left:36px;top:233px;width:213px;height:29px;background:#fff;border:1px solid #c8c8c8"></div>
<svg class="abs" style="left:234px;top:243px" width="9" height="9"><path d="M1 1L8 8M8 1L1 8" stroke="#9a9a9a" stroke-width="1.2"/></svg>
<div class="arr" style="left:254px;top:245px"></div>
<div class="abs" style="left:274px;top:246px;width:11px;height:3px;background:#8a8a8a"></div><div class="abs" style="left:278px;top:242px;width:3px;height:11px;background:#8a8a8a"></div>
<div class="abs" style="left:12px;top:266px;width:280px;height:729px;background:#fff;border:1px solid #d6d6d6;overflow:hidden">
<div class="i" style="left:3px;top:3px;width:16px;height:16px"><svg width="16" height="16" viewBox="0 0 16 16"><defs><linearGradient id="gp1" x1="0" y1="0" x2="1" y2="1"><stop offset="0" stop-color="#eefaff"/><stop offset="1" stop-color="#a6e0f2"/></linearGradient></defs><path d="M1.500 5L4.500 2H14.500V11L11.500 14H1.500Z" fill="#9fdcee" stroke="#2f9cc0"/><path d="M1.500 5H11.500V14H1.500Z" fill="url(#gp1)" stroke="#2f9cc0"/><path d="M11.500 5L14.500 2" stroke="#2f9cc0"/></svg></div>
<div class="tr" style="left:23px;top:0px">莲花头.PRT</div>
<div class="i" style="left:22px;top:27px;width:16px;height:16px"><svg width="16" height="16" viewBox="0 0 16 16"><path d="M4.500 4H14.500L11 12H1Z" fill="#fff" stroke="#6e5a36" stroke-width="1.300"/></svg></div>
<div class="tr" style="left:43px;top:24px">RIGHT</div>
<div class="i" style="left:22px;top:51px;width:16px;height:16px"><svg width="16" height="16" viewBox="0 0 16 16"><path d="M4.500 4H14.500L11 12H1Z" fill="#fff" stroke="#6e5a36" stroke-width="1.300"/></svg></div>
<div class="tr" style="left:43px;top:48px">TOP</div>
<div class="i" style="left:22px;top:75px;width:16px;height:16px"><svg width="16" height="16" viewBox="0 0 16 16"><path d="M4.500 4H14.500L11 12H1Z" fill="#fff" stroke="#6e5a36" stroke-width="1.300"/></svg></div>
<div class="tr" style="left:43px;top:72px">FRONT</div>
<div class="i" style="left:22px;top:99px;width:16px;height:16px"><svg width="16" height="16" viewBox="0 0 16 16"><path d="M5.500 1V11H15M5.500 11L1 15" stroke="#3a3a3a" stroke-width="1.200" fill="none"/><path d="M4 3L5.500 .8L7 3M13 9.500L15.300 11L13 12.500M.8 12.500V15.200H3.600" stroke="#3a3a3a" fill="none" stroke-width=".9"/></svg></div>
<div class="tr" style="left:43px;top:96px;letter-spacing:-.8px">PRT_CSYS_DEF</div>
<div class="i" style="left:22px;top:123px;width:16px;height:16px"><svg width="16" height="16" viewBox="0 0 16 16"><g fill="#6aa9c4"><rect x="1" y="2" width="1" height="1"/><rect x="4" y="2" width="1" height="1"/><rect x="7.500" y="2" width="1" height="1"/><rect x="11" y="2" width="1" height="1"/><rect x="14" y="2" width="1" height="1"/><rect x="1" y="13" width="1" height="1"/><rect x="4" y="13" width="1" height="1"/><rect x="7.500" y="13" width="1" height="1"/><rect x="11" y="13" width="1" height="1"/><rect x="14" y="13" width="1" height="1"/></g><path d="M2 11.500C3 4 13 4 14 11.500" stroke="#2f86b3" stroke-width="2" fill="none"/></svg></div>
<div class="tr" style="left:43px;top:120px">草绘 1</div>
<div class="i" style="left:22px;top:147px;width:16px;height:16px"><svg width="16" height="16" viewBox="0 0 16 16"><g fill="#6aa9c4"><rect x="1" y="2" width="1" height="1"/><rect x="4" y="2" width="1" height="1"/><rect x="7.500" y="2" width="1" height="1"/><rect x="11" y="2" width="1" height="1"/><rect x="14" y="2" width="1" height="1"/><rect x="1" y="13" width="1" height="1"/><rect x="4" y="13" width="1" height="1"/><rect x="7.500" y="13" width="1" height="1"/><rect x="11" y="13" width="1" height="1"/><rect x="14" y="13" width="1" height="1"/></g><path d="M2 11.500C3 4 13 4 14 11.500" stroke="#2f86b3" stroke-width="2" fill="none"/></svg></div>
<div class="tr" style="left:43px;top:144px">草绘 2</div>
<div class="i" style="left:22px;top:171px;width:16px;height:16px"><svg width="16" height="16" viewBox="0 0 16 16"><path d="M8 .5V15.500" stroke="#4a4a4a"/><path d="M1.500 2.500H3C5.500 2.500 5.500 6 5.500 8V14.500H1.500Z" fill="#fbf9fd" stroke="#a890cc"/><path d="M14.500 2.500H13C10.500 2.500 10.500 6 10.500 8V14.500H14.500Z" fill="#fbf9fd" stroke="#a890cc"/></svg></div>
<div class="tr" style="left:43px;top:168px">镜像 1</div>
<div class="i" style="left:22px;top:195px;width:16px;height:16px"><svg width="16" height="16" viewBox="0 0 16 16"><path d="M4.500 4H14.500L11 12H1Z" fill="#fff" stroke="#6e5a36" stroke-width="1.300"/></svg></div>
<div class="tr" style="left:43px;top:192px">DTM1</div>
<div class="i" style="left:22px;top:219px;width:16px;height:16px"><svg width="16" height="16" viewBox="0 0 16 16"><g fill="#6aa9c4"><rect x="1" y="2" width="1" height="1"/><rect x="4" y="2" width="1" height="1"/><rect x="7.500" y="2" width="1" height="1"/><rect x="11" y="2" width="1" height="1"/><rect x="14" y="2" width="1" height="1"/><rect x="1" y="13" width="1" height="1"/><rect x="4" y="13" width="1" height="1"/><rect x="7.500" y="13" width="1" height="1"/><rect x="11" y="13" width="1" height="1"/><rect x="14" y="13" width="1" height="1"/></g><path d="M2 11.500C3 4 13 4 14 11.500" stroke="#2f86b3" stroke-width="2" fill="none"/></svg></div>
<div class="tr" style="left:43px;top:216px">草绘 3</div>
<div class="i" style="left:22px;top:243px;width:16px;height:16px"><svg width="16" height="16" viewBox="0 0 16 16"><g fill="#6aa9c4"><rect x="1" y="2" width="1" height="1"/><rect x="4" y="2" width="1" height="1"/><rect x="7.500" y="2" width="1" height="1"/><rect x="11" y="2" width="1" height="1"/><rect x="14" y="2" width="1" height="1"/><rect x="1" y="13" width="1" height="1"/><rect x="4" y="13" width="1" height="1"/><rect x="7.500" y="13" width="1" height="1"/><rect x="11" y="13" width="1" height="1"/><rect x="14" y="13" width="1" height="1"/></g><path d="M2 11.500C3 4 13 4 14 11.500" stroke="#2f86b3" stroke-width="2" fill="none"/></svg></div>
<div class="tr" style="left:43px;top:240px">草绘 4</div>
<div class="i" style="left:22px;top:267px;width:16px;height:16px"><svg width="16" height="16" viewBox="0 0 16 16"><path d="M4.500 4H14.500L11 12H1Z" fill="#fff" stroke="#6e5a36" stroke-width="1.300"/></svg></div>
<div class="tr" style="left:43px;top:264px">DTM2</div>
<div class="i" style="left:22px;top:291px;width:16px;height:16px"><svg width="16" height="16" viewBox="0 0 16 16"><g fill="#6aa9c4"><rect x="1" y="2" width="1" height="1"/><rect x="4" y="2" width="1" height="1"/><rect x="7.500" y="2" width="1" height="1"/><rect x="11" y="2" width="1" height="1"/><rect x="14" y="2" width="1" height="1"/><rect x="1" y="13" width="1" height="1"/><rect x="4" y="13" width="1" height="1"/><rect x="7.500" y="13" width="1" height="1"/><rect x="11" y="13" width="1" height="1"/><rect x="14" y="13" width="1" height="1"/></g><path d="M2 11.500C3 4 13 4 14 11.500" stroke="#2f86b3" stroke-width="2" fill="none"/></svg></div>
<div class="tr" style="left:43px;top:288px">草绘 5</div>
<div class="i" style="left:22px;top:315px;width:16px;height:16px"><svg width="16" height="16" viewBox="0 0 16 16"><path d="M4.500 4H14.500L11 12H1Z" fill="#fff" stroke="#6e5a36" stroke-width="1.300"/></svg></div>
<div class="tr" style="left:43px;top:312px">DTM3</div>
<div class="i" style="left:22px;top:339px;width:16px;height:16px"><svg width="16" height="16" viewBox="0 0 16 16"><g fill="#6aa9c4"><rect x="1" y="2" width="1" height="1"/><rect x="4" y="2" width="1" height="1"/><rect x="7.500" y="2" width="1" height="1"/><rect x="11" y="2" width="1" height="1"/><rect x="14" y="2" width="1" height="1"/><rect x="1" y="13" width="1" height="1"/><rect x="4" y="13" width="1" height="1"/><rect x="7.500" y="13" width="1" height="1"/><rect x="11" y="13" width="1" height="1"/><rect x="14" y="13" width="1" height="1"/></g><path d="M2 11.500C3 4 13 4 14 11.500" stroke="#2f86b3" stroke-width="2" fill="none"/></svg></div>
<div class="tr" style="left:43px;top:336px">草绘 6</div>
<div class="i" style="left:22px;top:363px;width:16px;height:16px"><svg width="16" height="16" viewBox="0 0 16 16"><path d="M4.500 4H14.500L11 12H1Z" fill="#fff" stroke="#6e5a36" stroke-width="1.300"/></svg></div>
<div class="tr" style="left:43px;top:360px">DTM4</div>
<div class="i" style="left:22px;top:387px;width:16px;height:16px"><svg width="16" height="16" viewBox="0 0 16 16"><g fill="#6aa9c4"><rect x="1" y="2" width="1" height="1"/><rect x="4" y="2" width="1" height="1"/><rect x="7.500" y="2" width="1" height="1"/><rect x="11" y="2" width="1" height="1"/><rect x="14" y="2" width="1" height="1"/><rect x="1" y="13" width="1" height="1"/><rect x="4" y="13" width="1" height="1"/><rect x="7.500" y="13" width="1" height="1"/><rect x="11" y="13" width="1" height="1"/><rect x="14" y="13" width="1" height="1"/></g><path d="M2 11.500C3 4 13 4 14 11.500" stroke="#2f86b3" stroke-width="2" fill="none"/></svg></div>
<div class="tr" style="left:43px;top:384px">草绘 7</div>
<div class="i" style="left:22px;top:411px;width:16px;height:16px"><svg width="16" height="16" viewBox="0 0 16 16"><g fill="#6aa9c4"><rect x="1" y="2" width="1" height="1"/><rect x="4" y="2" width="1" height="1"/><rect x="7.500" y="2" width="1" height="1"/><rect x="11" y="2" width="1" height="1"/><rect x="14" y="2" width="1" height="1"/><rect x="1" y="13" width="1" height="1"/><rect x="4" y="13" width="1" height="1"/><rect x="7.500" y="13" width="1" height="1"/><rect x="11" y="13" width="1" height="1"/><rect x="14" y="13" width="1" height="1"/></g><path d="M2 11.500C3 4 13 4 14 11.500" stroke="#2f86b3" stroke-width="2" fill="none"/></svg></div>
<div class="tr" style="left:43px;top:408px">草绘 10</div>
<div class="i" style="left:22px;top:435px;width:16px;height:16px"><svg width="16" height="16" viewBox="0 0 16 16"><g fill="#6aa9c4"><rect x="1" y="2" width="1" height="1"/><rect x="4" y="2" width="1" height="1"/><rect x="7.500" y="2" width="1" height="1"/><rect x="11" y="2" width="1" height="1"/><rect x="14" y="2" width="1" height="1"/><rect x="1" y="13" width="1" height="1"/><rect x="4" y="13" width="1" height="1"/><rect x="7.500" y="13" width="1" height="1"/><rect x="11" y="13" width="1" height="1"/><rect x="14" y="13" width="1" height="1"/></g><path d="M2 11.500C3 4 13 4 14 11.500" stroke="#2f86b3" stroke-width="2" fill="none"/></svg></div>
<div class="tr" style="left:43px;top:432px">草绘 11</div>
<div class="i" style="left:22px;top:459px;width:16px;height:16px"><svg width="16" height="16" viewBox="0 0 16 16"><g fill="#6aa9c4"><rect x="1" y="2" width="1" height="1"/><rect x="4" y="2" width="1" height="1"/><rect x="7.500" y="2" width="1" height="1"/><rect x="11" y="2" width="1" height="1"/><rect x="14" y="2" width="1" height="1"/><rect x="1" y="13" width="1" height="1"/><rect x="4" y="13" width="1" height="1"/><rect x="7.500" y="13" width="1" height="1"/><rect x="11" y="13" width="1" height="1"/><rect x="14" y="13" width="1" height="1"/></g><path d="M2 11.500C3 4 13 4 14 11.500" stroke="#2f86b3" stroke-width="2" fill="none"/></svg></div>
<div class="tr" style="left:43px;top:456px">草绘 12</div>
<div class="i" style="left:22px;top:483px;width:16px;height:16px"><svg width="16" height="16" viewBox="0 0 16 16"><rect x="6.500" y="1.500" width="8" height="7" fill="#e6f6fc" stroke="#3a8fb5"/><path d="M4 8L8 3M9 12L14 8" stroke="#3a8fb5" stroke-width=".8"/><circle cx="5.500" cy="10.500" r="4" fill="#a6e0f2" stroke="#2f86b3" stroke-width="1.100"/></svg></div>
<div class="tr" style="left:43px;top:480px">混合 1</div>
<div class="i" style="left:22px;top:507px;width:16px;height:16px"><svg width="16" height="16" viewBox="0 0 16 16"><path d="M1.500 5.500L5.500 1.500H14.500V10.500L10.500 14.500H1.500Z" fill="#fff" stroke="#8a8a8a"/><path d="M1.500 5.500L5.500 1.500H14.500L10.500 5.500Z" fill="#a8dcee"/><path d="M10.500 5.500L14.500 1.500V10.500L10.500 14.500Z" fill="#4ea6cb"/><path d="M1.500 5.500H10.500V14.500H1.500Z" fill="#fbfbfb" stroke="#8f8f8f"/></svg></div>
<div class="abs" style="left:9px;top:511px;width:0;height:0;border-top:4px solid transparent;border-bottom:4px solid transparent;border-left:6px solid #8a8a8a"></div>
<div class="tr" style="left:43px;top:504px">拉伸 1</div>
<div class="i" style="left:22px;top:531px;width:16px;height:16px"><svg width="16" height="16" viewBox="0 0 16 16"><path d="M2 7C5 3 10 1.500 15 2.500C14.500 7 13 11 10.500 14.500C8 13 4.500 13 1.500 14C2.500 11.500 2.500 9.500 2 7Z" fill="#d9f1fa" stroke="#6f7f88" stroke-width=".9"/><path d="M7 4C7.500 7 7 10.500 5.500 13M2.300 9.500C6 8 10 8 13.500 9M11 2.500C11.500 6 10 11 8 13.500" stroke="#6f7f88" fill="none" stroke-width=".8"/></svg></div>
<div class="tr" style="left:43px;top:528px">边界混合 1</div>
<div class="i" style="left:22px;top:555px;width:16px;height:16px"><svg width="16" height="16" viewBox="0 0 16 16"><path d="M8 .5V15.500" stroke="#4a4a4a"/><path d="M1.500 2.500H3C5.500 2.500 5.500 6 5.500 8V14.500H1.500Z" fill="#fbf9fd" stroke="#a890cc"/><path d="M14.500 2.500H13C10.500 2.500 10.500 6 10.500 8V14.500H14.500Z" fill="#fbf9fd" stroke="#a890cc"/></svg></div>
<div class="tr" style="left:43px;top:552px">镜像 2</div>
<div class="i" style="left:22px;top:579px;width:16px;height:16px"><svg width="16" height="16" viewBox="0 0 16 16"><path d="M3.500 6.600H8V4L13 8L8 12V9.400H3.500Z" fill="#2e9b2e" stroke="#156015" stroke-width=".9"/></svg></div>
<div class="tr" style="left:43px;top:576px">在此插入</div>
<div class="i" style="left:22px;top:603px;width:16px;height:16px"><svg width="16" height="16" viewBox="0 0 16 16"><rect x="6.500" y="1.500" width="8" height="8" fill="#fff" stroke="#4a5a63" stroke-width="1.100"/><circle cx="6.500" cy="9.500" r="5.200" fill="#eefaff" stroke="#2f86a8" stroke-width="1.200"/><path d="M6.500 4.500V9.500H11.500" stroke="#7bb6cc" fill="none"/></svg></div>
<div class="abs" style="left:43px;top:605px;width:3px;height:4px;background:#333"></div>
<div class="tr" style="left:49px;top:600px">合并 1</div>
<div class="i" style="left:22px;top:627px;width:16px;height:16px"><svg width="16" height="16" viewBox="0 0 16 16"><path d="M8 .5V15.500" stroke="#4a4a4a"/><path d="M1.500 2.500H3C5.500 2.500 5.500 6 5.500 8V14.500H1.500Z" fill="#fbf9fd" stroke="#a890cc"/><path d="M14.500 2.500H13C10.500 2.500 10.500 6 10.500 8V14.500H14.500Z" fill="#fbf9fd" stroke="#a890cc"/></svg></div>
<div class="abs" style="left:43px;top:629px;width:3px;height:4px;background:#333"></div>
<div class="tr" style="left:49px;top:624px">镜像 3</div>
<div class="i" style="left:22px;top:651px;width:16px;height:16px"><svg width="16" height="16" viewBox="0 0 16 16"><rect x="6.500" y="1.500" width="8" height="8" fill="#fff" stroke="#4a5a63" stroke-width="1.100"/><circle cx="6.500" cy="9.500" r="5.200" fill="#eefaff" stroke="#2f86a8" stroke-width="1.200"/><path d="M6.500 4.500V9.500H11.500" stroke="#7bb6cc" fill="none"/></svg></div>
<div class="abs" style="left:43px;top:653px;width:3px;height:4px;background:#333"></div>
<div class="tr" style="left:49px;top:648px">合并 2</div>
<div class="i" style="left:22px;top:675px;width:16px;height:16px"><svg width="16" height="16" viewBox="0 0 16 16"><rect x="6.500" y="1.500" width="8" height="8" fill="#fff" stroke="#4a5a63" stroke-width="1.100"/><circle cx="6.500" cy="9.500" r="5.200" fill="#eefaff" stroke="#2f86a8" stroke-width="1.200"/><path d="M6.500 4.500V9.500H11.500" stroke="#7bb6cc" fill="none"/></svg></div>
<div class="abs" style="left:43px;top:677px;width:3px;height:4px;background:#333"></div>
<div class="tr" style="left:49px;top:672px">合并 3</div>
<div class="i" style="left:22px;top:699px;width:16px;height:16px"><svg width="16" height="16" viewBox="0 0 16 16"><rect x="2" y="2" width="12" height="12" fill="#d6f0f9" stroke="#2f8db5" stroke-width="1.200"/><path d="M2.500 7L7 2.500M2.500 11L11 2.500M3 14L14 3M6.500 14L14 6.500M10 14L14 10" stroke="#8fd3ea" stroke-width="1"/><rect x="2" y="2" width="12" height="12" fill="none" stroke="#2f8db5" stroke-width="1.200"/></svg></div>
<div class="abs" style="left:43px;top:701px;width:3px;height:4px;background:#333"></div>
<div class="tr" style="left:49px;top:696px">填充 1</div>
<div class="i" style="left:22px;top:723px;width:16px;height:16px"><svg width="16" height="16" viewBox="0 0 16 16"><rect x="2" y="2" width="12" height="12" fill="#d6f0f9" stroke="#2f8db5" stroke-width="1.200"/><path d="M2.500 7L7 2.500M2.500 11L11 2.500M3 14L14 3M6.500 14L14 6.500M10 14L14 10" stroke="#8fd3ea" stroke-width="1"/><rect x="2" y="2" width="12" height="12" fill="none" stroke="#2f8db5" stroke-width="1.200"/></svg></div>
<div class="abs" style="left:43px;top:725px;width:3px;height:4px;background:#333"></div>
<div class="tr" style="left:49px;top:720px">填充 2</div>
<div class="abs" style="left:264px;top:0;width:15px;height:727px;background:#e2e2e2;border-left:1px solid #d0d0d0"></div>
<div class="abs" style="left:265px;top:0;width:14px;height:14px;background:#f6f6f6;border:1px solid #cfcfcf"></div><div class="abs" style="left:268px;top:4px;width:0;height:0;border-left:4px solid transparent;border-right:4px solid transparent;border-bottom:4px solid #8c8c8c"></div>
<div class="abs" style="left:265px;top:16px;width:14px;height:586px;background:#f8f8f8;border:1px solid #cfcfcf"></div>
<div class="abs" style="left:265px;top:713px;width:14px;height:14px;background:#f6f6f6;border:1px solid #cfcfcf"></div><div class="abs" style="left:268px;top:718px;width:0;height:0;border-left:4px solid transparent;border-right:4px solid transparent;border-top:4px solid #8c8c8c"></div>
</div>
<div class="abs" style="left:297px;top:176px;width:3px;height:826px;background:#c9c9c9;border-left:1px solid #adadad"></div>
<div id="gfx" class="abs"><svg width="1152" height="825" viewBox="300 176 1152 825" style="position:absolute;left:0;top:0" font-family="'DejaVu Sans Light','DejaVu Sans','Liberation Sans',sans-serif"><defs><clipPath id="cb"><path d="M514.6 673 L518 670.7 L522.5 667.6 L527.8 664.1 L533.7 660.1 L540.1 655.7 L546.7 651 L553.4 646.1 L560 641.2 L566.6 636.1 L573.4 630.7 L580.5 625.1 L587.7 619.2 L595.1 613.2 L602.6 606.9 L610.1 600.5 L617.7 593.9 L625.4 587 L633.4 579.8 L641.5 572.3 L649.7 564.6 L657.8 556.9 L665.8 549.4 L673.6 542 L681 535 L688.1 528.3 L694.9 521.8 L701.5 515.5 L707.9 509.3 L714.2 503.2 L720.5 497.2 L726.7 491.2 L733 485.1 L739.2 479 L745.4 473 L751.5 467.1 L757.5 461.2 L763.5 455.3 L769.6 449.4 L775.8 443.5 L782 437.6 L788.3 431.7 L794.5 425.9 L800.7 420.1 L806.9 414.4 L813.3 408.6 L819.9 402.7 L826.8 396.8 L834 390.8 L841.8 384.5 L850.2 377.9 L859 371.1 L867.9 364.3 L876.7 357.7 L885.1 351.4 L893 345.7 L900 340.6 L905.7 336.5 L910.3 333.3 L914.1 330.8 L917.6 328.5 L921.2 326.2 L925.6 323.7 L931 320.4 L938 316.3 L946.9 311 L957.4 304.9 L969 298.2 L981.3 291.1 L993.7 284 L1005.8 277.1 L1017.1 270.7 L1027 265.1 L1036 260 L1044.8 255.2 L1053.2 250.6 L1061.1 246.4 L1068.2 242.5 L1074.5 239.1 L1079.8 236.3 L1084 234 L1086.7 235.9 L1090.6 238.7 L1094.7 241.8 L1098 244.5 L1100 246.8 L1101.4 249 L1102.6 251.1 L1104 253 L1105.6 254.9 L1107.2 256.8 L1109 258.3 L1111 259 L1113.2 258.3 L1115.7 256.7 L1118.3 254.9 L1121 254 L1123.2 253.6 L1125.1 253.3 L1128 254.2 L1133 257.5 L1141.3 264 L1151.9 272.9 L1163.1 282.8 L1173 292 L1181.4 300.7 L1189.2 309.5 L1196.1 317.8 L1202 325 L1206.5 330.7 L1209.8 335.3 L1212.4 339.5 L1215 344 L1217.5 349.1 L1219.7 354.4 L1221.6 359.5 L1223.6 364 L1225.3 367.4 L1226.8 370.2 L1228.5 372.8 L1231 376 L1234.7 380 L1239.3 384.3 L1244 388.8 L1248 393 L1251.1 396.7 L1253.7 400 L1255.9 403.5 L1258 407.5 L1259.9 412.1 L1261.5 417.2 L1262.9 422.6 L1264 428 L1264.8 433.9 L1265.3 440.2 L1265.7 446.1 L1266 451 L1266.3 454.6 L1266.6 457.4 L1266.8 459.5 L1267 461 L1261.6 464.3 L1254.4 468.7 L1245.8 474 L1236.2 479.8 L1226.1 485.9 L1215.8 492.2 L1205.6 498.3 L1196 504 L1186.5 509.6 L1176.6 515.3 L1166.5 521.2 L1156.4 527 L1146.4 532.7 L1136.9 538.1 L1128.1 543.1 L1120 547.5 L1113 551.3 L1107 554.4 L1101.7 557.1 L1096.8 559.6 L1092 561.9 L1086.9 564.3 L1081.4 567 L1075 570 L1068.1 573.3 L1061.2 576.7 L1054.1 580.3 L1046.6 583.9 L1038.5 587.7 L1029.9 591.6 L1020.4 595.7 L1010 600 L998 604.7 L984.3 609.8 L969.5 615.3 L954.2 620.8 L939 626.2 L924.5 631.4 L911.3 636 L900 640 L890.8 643.2 L883.3 645.8 L877 647.9 L871.4 649.8 L866.1 651.4 L860.8 653.1 L854.9 654.9 L848 657 L840.1 659.4 L831.5 662 L822.5 664.6 L813.3 667.2 L804.2 669.9 L795.4 672.4 L787.3 674.8 L780 677 L773.7 678.9 L768.4 680.6 L763.6 682.1 L759.2 683.5 L754.8 684.9 L750.3 686.4 L745.3 688.1 L739.6 690 L733.2 692.2 L726.3 694.5 L719 697 L711.5 699.6 L703.9 702.2 L696.4 704.9 L689 707.7 L682 710.4 L675.2 713.1 L668.6 715.9 L662.2 718.7 L655.7 721.6 L649.4 724.5 L643 727.5 L636.5 730.5 L630 733.5 L623 736.8 L615.5 740.4 L607.7 744.1 L600.1 747.9 L592.8 751.5 L586.2 754.7 L580.7 757.4 L576.6 759.4 Z"/></clipPath><clipPath id="ce1"><ellipse cx="449.5" cy="777" rx="58.4" ry="25.3" transform="rotate(62.3 449.5 777)"/></clipPath><filter id="bl4" x="-10%" y="-10%" width="120%" height="120%"><feGaussianBlur stdDeviation="4"/></filter><filter id="bl3" x="-10%" y="-10%" width="120%" height="120%"><feGaussianBlur stdDeviation="3"/></filter><filter id="bl6" x="-10%" y="-10%" width="120%" height="120%"><feGaussianBlur stdDeviation="6"/></filter><linearGradient id="gcyl" gradientUnits="userSpaceOnUse" x1="514.553" y1="672.993" x2="568.847" y2="776.407"><stop offset="0" stop-color="#a3abf4"/><stop offset=".25" stop-color="#acb4fb"/><stop offset=".55" stop-color="#9aa2e8"/><stop offset=".8" stop-color="#7c84c4"/><stop offset="1" stop-color="#6a72ad"/></linearGradient><linearGradient id="gin" gradientUnits="userSpaceOnUse" x1="422.353" y1="725.293" x2="476.647" y2="828.707"><stop offset="0" stop-color="#6169a8"/><stop offset=".45" stop-color="#7a82c6"/><stop offset="1" stop-color="#a0a8f0"/></linearGradient><linearGradient id="gin2" gradientUnits="userSpaceOnUse" x1="422.353" y1="725.293" x2="476.647" y2="828.707"><stop offset="0" stop-color="#8f97dc"/><stop offset="1" stop-color="#aab2fa"/></linearGradient><linearGradient id="gside" gradientUnits="userSpaceOnUse" x1="577" y1="745" x2="1267" y2="440"><stop offset="0" stop-color="#878fd0"/><stop offset=".2" stop-color="#7a82c4"/><stop offset=".5" stop-color="#6f77b6"/><stop offset="1" stop-color="#6a71ae"/></linearGradient><linearGradient id="ggr" gradientUnits="userSpaceOnUse" x1="585" y1="697" x2="1219" y2="358"><stop offset="0" stop-color="#8d95d6" stop-opacity="0"/><stop offset=".12" stop-color="#8d95d6" stop-opacity=".2"/><stop offset=".35" stop-color="#8d95d6" stop-opacity=".6"/><stop offset=".7" stop-color="#868ed0" stop-opacity="1"/><stop offset="1" stop-color="#7f87c8" stop-opacity="1"/></linearGradient></defs><path d="M514.6 673 L518 670.7 L522.5 667.6 L527.8 664.1 L533.7 660.1 L540.1 655.7 L546.7 651 L553.4 646.1 L560 641.2 L566.6 636.1 L573.4 630.7 L580.5 625.1 L587.7 619.2 L595.1 613.2 L602.6 606.9 L610.1 600.5 L617.7 593.9 L625.4 587 L633.4 579.8 L641.5 572.3 L649.7 564.6 L657.8 556.9 L665.8 549.4 L673.6 542 L681 535 L688.1 528.3 L694.9 521.8 L701.5 515.5 L707.9 509.3 L714.2 503.2 L720.5 497.2 L726.7 491.2 L733 485.1 L739.2 479 L745.4 473 L751.5 467.1 L757.5 461.2 L763.5 455.3 L769.6 449.4 L775.8 443.5 L782 437.6 L788.3 431.7 L794.5 425.9 L800.7 420.1 L806.9 414.4 L813.3 408.6 L819.9 402.7 L826.8 396.8 L834 390.8 L841.8 384.5 L850.2 377.9 L859 371.1 L867.9 364.3 L876.7 357.7 L885.1 351.4 L893 345.7 L900 340.6 L905.7 336.5 L910.3 333.3 L914.1 330.8 L917.6 328.5 L921.2 326.2 L925.6 323.7 L931 320.4 L938 316.3 L946.9 311 L957.4 304.9 L969 298.2 L981.3 291.1 L993.7 284 L1005.8 277.1 L1017.1 270.7 L1027 265.1 L1036 260 L1044.8 255.2 L1053.2 250.6 L1061.1 246.4 L1068.2 242.5 L1074.5 239.1 L1079.8 236.3 L1084 234 L1086.7 235.9 L1090.6 238.7 L1094.7 241.8 L1098 244.5 L1100 246.8 L1101.4 249 L1102.6 251.1 L1104 253 L1105.6 254.9 L1107.2 256.8 L1109 258.3 L1111 259 L1113.2 258.3 L1115.7 256.7 L1118.3 254.9 L1121 254 L1123.2 253.6 L1125.1 253.3 L1128 254.2 L1133 257.5 L1141.3 264 L1151.9 272.9 L1163.1 282.8 L1173 292 L1181.4 300.7 L1189.2 309.5 L1196.1 317.8 L1202 325 L1206.5 330.7 L1209.8 335.3 L1212.4 339.5 L1215 344 L1217.5 349.1 L1219.7 354.4 L1221.6 359.5 L1223.6 364 L1225.3 367.4 L1226.8 370.2 L1228.5 372.8 L1231 376 L1234.7 380 L1239.3 384.3 L1244 388.8 L1248 393 L1251.1 396.7 L1253.7 400 L1255.9 403.5 L1258 407.5 L1259.9 412.1 L1261.5 417.2 L1262.9 422.6 L1264 428 L1264.8 433.9 L1265.3 440.2 L1265.7 446.1 L1266 451 L1266.3 454.6 L1266.6 457.4 L1266.8 459.5 L1267 461 L1261.6 464.3 L1254.4 468.7 L1245.8 474 L1236.2 479.8 L1226.1 485.9 L1215.8 492.2 L1205.6 498.3 L1196 504 L1186.5 509.6 L1176.6 515.3 L1166.5 521.2 L1156.4 527 L1146.4 532.7 L1136.9 538.1 L1128.1 543.1 L1120 547.5 L1113 551.3 L1107 554.4 L1101.7 557.1 L1096.8 559.6 L1092 561.9 L1086.9 564.3 L1081.4 567 L1075 570 L1068.1 573.3 L1061.2 576.7 L1054.1 580.3 L1046.6 583.9 L1038.5 587.7 L1029.9 591.6 L1020.4 595.7 L1010 600 L998 604.7 L984.3 609.8 L969.5 615.3 L954.2 620.8 L939 626.2 L924.5 631.4 L911.3 636 L900 640 L890.8 643.2 L883.3 645.8 L877 647.9 L871.4 649.8 L866.1 651.4 L860.8 653.1 L854.9 654.9 L848 657 L840.1 659.4 L831.5 662 L822.5 664.6 L813.3 667.2 L804.2 669.9 L795.4 672.4 L787.3 674.8 L780 677 L773.7 678.9 L768.4 680.6 L763.6 682.1 L759.2 683.5 L754.8 684.9 L750.3 686.4 L745.3 688.1 L739.6 690 L733.2 692.2 L726.3 694.5 L719 697 L711.5 699.6 L703.9 702.2 L696.4 704.9 L689 707.7 L682 710.4 L675.2 713.1 L668.6 715.9 L662.2 718.7 L655.7 721.6 L649.4 724.5 L643 727.5 L636.5 730.5 L630 733.5 L623 736.8 L615.5 740.4 L607.7 744.1 L600.1 747.9 L592.8 751.5 L586.2 754.7 L580.7 757.4 L576.6 759.4 Z" fill="#abb3fa"/><g clip-path="url(#cb)"><path d="M514.6 673 L518 670.7 L522.5 667.6 L527.8 664.1 L533.7 660.1 L540.1 655.7 L546.7 651 L553.4 646.1 L560 641.2 L566.6 636.1 L573.4 630.7 L580.5 625.1 L587.7 619.2 L595.1 613.2 L602.6 606.9 L610.1 600.5 L617.7 593.9 L625.4 587 L633.4 579.8 L641.5 572.3 L649.7 564.6 L657.8 556.9 L665.8 549.4 L673.6 542 L681 535 L688.1 528.3 L694.9 521.8 L701.5 515.5 L707.9 509.3 L714.2 503.2 L720.5 497.2 L726.7 491.2 L733 485.1 L739.2 479 L745.4 473 L751.5 467.1 L757.5 461.2 L763.5 455.3 L769.6 449.4 L775.8 443.5 L782 437.6 L788.3 431.7 L794.5 425.9 L800.7 420.1 L806.9 414.4 L813.3 408.6 L819.9 402.7 L826.8 396.8 L834 390.8 L841.8 384.5 L850.2 377.9 L859 371.1 L867.9 364.3 L876.7 357.7 L885.1 351.4 L893 345.7 L900 340.6 L905.7 336.5 L910.3 333.3 L914.1 330.8 L917.6 328.5 L921.2 326.2 L925.6 323.7 L931 320.4 L938 316.3 L946.9 311 L957.4 304.9 L969 298.2 L981.3 291.1 L993.7 284 L1005.8 277.1 L1017.1 270.7 L1027 265.1 L1036 260 L1044.8 255.2 L1053.2 250.6 L1061.1 246.4 L1068.2 242.5 L1074.5 239.1 L1079.8 236.3 L1084 234 L1111 259 L1106.4 261.6 L1100.3 265.1 L1093.1 269.2 L1085 273.8 L1076.4 278.7 L1067.5 283.8 L1058.6 289 L1050 294 L1041.8 298.8 L1033.9 303.6 L1025.8 308.4 L1017.6 313.4 L1008.9 318.6 L999.5 324.4 L989.3 330.6 L978 337.6 L965.3 345.4 L951.3 354 L936.2 363.1 L920.6 372.7 L904.8 382.5 L889.2 392.4 L874.1 402.2 L860 411.7 L846.6 421.2 L833.3 430.9 L820.3 440.8 L807.6 450.6 L795.3 460.2 L783.6 469.5 L772.5 478.4 L762 486.7 L752.4 494.3 L743.8 501.3 L735.8 507.8 L728.3 514 L721 520 L713.8 526 L706.3 532.2 L698.5 538.7 L690 545.7 L681 553.2 L671.7 561 L662.5 568.7 L653.7 576.1 L645.4 582.8 L638.1 588.8 L632 593.5 L627.1 597 L623.3 599.5 L620.2 601.1 L617.8 602.2 L616 602.8 L614.5 603.2 L613.2 603.5 L612 604 Z" fill="#a4acf4" filter="url(#bl4)"/><path d="M612 604 L613.2 603.5 L614.5 603.2 L616 602.8 L617.8 602.2 L620.2 601.1 L623.3 599.5 L627.1 597 L632 593.5 L638.1 588.8 L645.4 582.8 L653.7 576.1 L662.5 568.7 L671.7 561 L681 553.2 L690 545.7 L698.5 538.7 L706.3 532.2 L713.8 526 L721 520 L728.3 514 L735.8 507.8 L743.8 501.3 L752.4 494.3 L762 486.7 L772.5 478.4 L783.6 469.5 L795.3 460.2 L807.6 450.6 L820.3 440.8 L833.3 430.9 L846.6 421.2 L860 411.7 L874.1 402.2 L889.2 392.4 L904.8 382.5 L920.6 372.7 L936.2 363.1 L951.3 354 L965.3 345.4 L978 337.6 L989.3 330.6 L999.5 324.4 L1008.9 318.6 L1017.6 313.4 L1025.8 308.4 L1033.9 303.6 L1041.8 298.8 L1050 294 L1058.6 289 L1067.5 283.8 L1076.4 278.7 L1085 273.8 L1093.1 269.2 L1100.3 265.1 L1106.4 261.6 L1111 259" fill="none" stroke="#9098dc" stroke-width="4" filter="url(#bl3)"/><path d="M612 604 L613.2 603.5 L614.5 603.2 L616 602.8 L617.8 602.2 L620.2 601.1 L623.3 599.5 L627.1 597 L632 593.5 L638.1 588.8 L645.4 582.8 L653.7 576.1 L662.5 568.7 L671.7 561 L681 553.2 L690 545.7 L698.5 538.7 L706.3 532.2 L713.8 526 L721 520 L728.3 514 L735.8 507.8 L743.8 501.3 L752.4 494.3 L762 486.7 L772.5 478.4 L783.6 469.5 L795.3 460.2 L807.6 450.6 L820.3 440.8 L833.3 430.9 L846.6 421.2 L860 411.7 L874.1 402.2 L889.2 392.4 L904.8 382.5 L920.6 372.7 L936.2 363.1 L951.3 354 L965.3 345.4 L978 337.6 L989.3 330.6 L999.5 324.4 L1008.9 318.6 L1017.6 313.4 L1025.8 308.4 L1033.9 303.6 L1041.8 298.8 L1050 294 L1058.6 289 L1067.5 283.8 L1076.4 278.7 L1085 273.8 L1093.1 269.2 L1100.3 265.1 L1106.4 261.6 L1111 259" fill="none" stroke="#8890d2" stroke-width="1" opacity=".8"/><path d="M662.5 568.7 L671.7 561 L681 553.2 L690 545.7 L698.5 538.7 L706.3 532.2 L713.8 526 L721 520 L728.3 514 L735.8 507.8 L743.8 501.3 L752.4 494.3 L762 486.7 L772.5 478.4 L783.6 469.5 L795.3 460.2 L807.6 450.6 L820.3 440.8 L833.3 430.9 L846.6 421.2 L860 411.7 L874.1 402.2 L889.2 392.4 L904.8 382.5 L920.6 372.7 L936.2 363.1 L951.3 354 L965.3 345.4 L978 337.6 L989.3 330.6 L999.5 324.4 L1008.9 318.6" fill="none" stroke="#6f7396" stroke-width=".9" opacity=".7" stroke-dasharray="6 3 1 3 2 4"/><path d="M585 697 L588.9 694.9 L593.8 692.3 L599.6 689.3 L606.2 685.8 L613.7 681.8 L621.8 677.5 L630.6 672.9 L640 668 L650.2 662.7 L661.4 656.8 L673.3 650.6 L685.9 644 L699.1 637.2 L712.5 630.2 L726.2 623.1 L740 616 L754 608.9 L768.3 601.6 L783 594.2 L798 586.6 L813.2 578.9 L828.7 571.1 L844.3 563.1 L860 555 L876.3 546.5 L893.3 537.4 L910.8 528 L928.3 518.6 L945.6 509.3 L962.2 500.5 L977.8 492.3 L992 485 L1005 478.6 L1017.1 473 L1028.4 467.9 L1038.9 463.3 L1048.8 459 L1058.1 455 L1066.8 451 L1075 447 L1082.1 443.3 L1087.7 440.3 L1092.3 437.6 L1096.5 435 L1100.8 432.2 L1105.8 429 L1112.1 425 L1120 420 L1130.5 413.5 L1143.3 405.5 L1157.5 396.6 L1172.3 387.3 L1186.8 378.2 L1199.9 370 L1211 363 L1219 358" fill="none" stroke="url(#ggr)" stroke-width="20" filter="url(#bl6)"/><path d="M585 697 L588.9 694.9 L593.8 692.3 L599.6 689.3 L606.2 685.8 L613.7 681.8 L621.8 677.5 L630.6 672.9 L640 668 L650.2 662.7 L661.4 656.8 L673.3 650.6 L685.9 644 L699.1 637.2 L712.5 630.2 L726.2 623.1 L740 616 L754 608.9 L768.3 601.6 L783 594.2 L798 586.6 L813.2 578.9 L828.7 571.1 L844.3 563.1 L860 555 L876.3 546.5 L893.3 537.4 L910.8 528 L928.3 518.6 L945.6 509.3 L962.2 500.5 L977.8 492.3 L992 485 L1005 478.6 L1017.1 473 L1028.4 467.9 L1038.9 463.3 L1048.8 459 L1058.1 455 L1066.8 451 L1075 447 L1082.1 443.3 L1087.7 440.3 L1092.3 437.6 L1096.5 435 L1100.8 432.2 L1105.8 429 L1112.1 425 L1120 420 L1130.5 413.5 L1143.3 405.5 L1157.5 396.6 L1172.3 387.3 L1186.8 378.2 L1199.9 370 L1211 363 L1219 358" fill="none" stroke="url(#ggr)" stroke-width="5" filter="url(#bl3)" opacity=".45"/><path d="M565 743 L577 737 L593.5 727.7 L610 718.5 L626.8 709.6 L643.8 701.2 L660.9 693.2 L678.2 685.4 L695.5 677.8 L712.9 670.1 L730.2 662.5 L747.4 654.6 L764.4 646.2 L781.6 638.3 L799 630.8 L816.5 623.4 L833.9 616.1 L851.4 608.7 L868.8 601.2 L886.2 593.7 L903.6 586.3 L921 578.8 L938.4 571.3 L955.8 563.8 L973.2 556.4 L990.7 549 L1008.2 541.7 L1025.6 534.2 L1042.9 526.5 L1060.1 518.5 L1077.2 510.5 L1094.3 502.4 L1111.4 494.2 L1128.4 485.9 L1145.4 477.5 L1162.4 469 L1179.2 460.3 L1195.9 451.4 L1212.3 441.9 L1228.4 431.9 L1244.2 421.5 L1260 411 L1274 403 L1300 440 L1300 560 L540 820 L540 740 Z" fill="#7b83c3" opacity="1" filter="url(#bl3)"/><path d="M565 745.7 L577 739.7 L593.5 730.5 L610.1 721.4 L626.9 712.6 L643.9 704.3 L661 696.3 L678.3 688.5 L695.7 681 L713.1 673.5 L730.5 666.1 L747.8 658.4 L764.9 650.3 L782.2 642.7 L799.7 635.5 L817.2 628.3 L834.7 621.3 L852.3 614.1 L869.8 606.8 L887.2 599.5 L904.7 592.2 L922.1 584.9 L939.6 577.5 L957 570.1 L974.4 562.8 L992 555.5 L1009.5 548.3 L1026.8 540.8 L1044.1 533 L1061.3 525 L1078.4 517 L1095.5 508.8 L1112.5 500.6 L1129.4 492.2 L1146.4 483.6 L1163.3 475 L1180 466.2 L1196.7 457.3 L1213.1 447.7 L1229.2 437.8 L1245 427.4 L1260.8 417 L1274.8 409 L1300 440 L1300 560 L540 820 L540 740 Z" fill="#6d75b3" opacity="1" filter="url(#bl3)"/><path d="M564.9 750.2 L576.9 744.2 L593.5 735.2 L610.2 726.3 L627 717.6 L644.1 709.4 L661.2 701.4 L678.5 693.8 L695.9 686.4 L713.4 679.2 L730.9 672.1 L748.4 664.8 L765.7 657.2 L783.1 650.1 L800.8 643.3 L818.5 636.6 L836.1 629.9 L853.8 623.1 L871.4 616.2 L888.9 609.1 L906.4 602.1 L924 595 L941.5 587.8 L959 580.7 L976.5 573.6 L994.1 566.4 L1011.6 559.2 L1028.9 551.7 L1046.1 543.9 L1063.3 535.7 L1080.3 527.7 L1097.4 519.6 L1114.3 511.2 L1131.2 502.6 L1148 493.9 L1164.8 485.1 L1181.4 476.1 L1198 467 L1214.3 457.5 L1230.4 447.5 L1246.3 437.3 L1262.2 427 L1276.2 419 L1300 440 L1300 560 L540 820 L540 740 Z" fill="#666eaa" opacity="1" filter="url(#bl4)"/><path d="M564.8 756.9 L576.8 750.9 L593.6 742.2 L610.3 733.6 L627.2 725.2 L644.4 717 L661.5 709.1 L678.8 701.6 L696.3 694.5 L714 687.7 L731.6 681 L749.3 674.3 L766.9 667.5 L784.6 661.1 L802.4 655 L820.3 648.9 L838.1 642.8 L856 636.6 L873.8 630.2 L891.4 623.6 L909.1 616.9 L926.8 610.1 L944.4 603.4 L962 596.5 L979.6 589.7 L997.2 582.8 L1014.7 575.6 L1032 568.1 L1049.2 560.2 L1066.2 551.9 L1083.3 543.9 L1100.3 535.6 L1117.1 527.1 L1133.8 518.2 L1150.4 509.2 L1167.1 500.1 L1183.5 491 L1200 481.7 L1216.2 472 L1232.4 462.2 L1248.4 452.1 L1264.3 442 L1278.3 434 L1300 440 L1300 560 L540 820 L540 740 Z" fill="#5f67a0" opacity="1" filter="url(#bl4)"/></g><path d="M422.353 725.293 L514.553 672.993 L514.553 672.993 L518.855 671.736 L523.852 672.089 L529.39 674.04 L535.303 677.531 L541.41 682.454 L547.526 688.662 L553.465 695.964 L559.046 704.139 L564.1 712.939 L568.474 722.097 L572.034 731.334 L574.673 740.369 L576.309 748.928 L576.894 756.75 L576.41 763.599 L574.871 769.266 L572.324 773.579 L568.847 776.407 L476.647 828.707 L476.647 828.707 L480.124 825.879 L482.671 821.566 L484.21 815.899 L484.694 809.05 L484.109 801.228 L482.473 792.669 L479.834 783.634 L476.274 774.397 L471.9 765.239 L466.846 756.439 L461.265 748.264 L455.326 740.962 L449.21 734.754 L443.103 729.831 L437.19 726.34 L431.652 724.389 L426.655 724.036 L422.353 725.293 Z" fill="url(#gcyl)"/><path d="M575 756 L579 757 L578 771 L571 775 Z" fill="#6a72ad"/><ellipse cx="449.5" cy="777" rx="58.4" ry="25.3" transform="rotate(62.3 449.5 777)" fill="url(#gin)"/><g clip-path="url(#ce1)"><path d="M447.500 720Q449 775 451.500 814L470 850H520V700Z" fill="url(#gin2)"/><path d="M447.500 736.500Q449 775 451.500 814" stroke="#35c3e6" stroke-width="1.100" fill="none"/></g><ellipse cx="449.5" cy="777" rx="58.4" ry="25.3" transform="rotate(62.3 449.5 777)" stroke="#2fc4e8" fill="none" stroke-width="1.1"/><path d="M514.553 672.993 L517.043 672.047 L519.804 671.678 L522.804 671.89 L526.011 672.68 L529.39 674.04 L532.904 675.956 L536.515 678.405 L540.182 681.362 L543.866 684.793 L547.526 688.662 L551.122 692.925 L554.615 697.537 L557.967 702.446 L561.14 707.599 L564.1 712.939 L566.815 718.409 L569.255 723.947 L571.393 729.493 L573.205 734.987 L574.673 740.369 L575.779 745.578 L576.512 750.559 L576.863 755.256 L576.829 759.619 L576.41 763.599 L575.611 767.153 L574.44 770.242 L572.911 772.832 L571.04 774.894 L568.847 776.407" stroke="#2fc4e8" fill="none" stroke-width="1.1"/><path d="M1084 234 L1086.7 235.9 L1090.6 238.7 L1094.7 241.8 L1098 244.5 L1100 246.8 L1101.4 249 L1102.6 251.1 L1104 253 L1105.6 254.9 L1107.2 256.8 L1109 258.3 L1111 259 L1113.2 258.3 L1115.7 256.7 L1118.3 254.9 L1121 254 L1123.2 253.6 L1125.1 253.3 L1128 254.2 L1133 257.5 L1141.3 264 L1151.9 272.9 L1163.1 282.8 L1173 292 L1181.4 300.7 L1189.2 309.5 L1196.1 317.8 L1202 325 L1206.5 330.7 L1209.8 335.3 L1212.4 339.5 L1215 344 L1217.5 349.1 L1219.7 354.4 L1221.6 359.5 L1223.6 364 L1225.3 367.4 L1226.8 370.2 L1228.5 372.8 L1231 376 L1234.7 380 L1239.3 384.3 L1244 388.8 L1248 393 L1251.1 396.7 L1253.7 400 L1255.9 403.5 L1258 407.5 L1259.9 412.1 L1261.5 417.2 L1262.9 422.6 L1264 428 L1264.8 433.9 L1265.3 440.2 L1265.7 446.1 L1266 451 L1266.3 454.6 L1266.6 457.4 L1266.8 459.5 L1267 461" stroke="#2fc4e8" fill="none" stroke-width="1.1"/><path d="M576.6 759.4 L580.7 757.4 L586.2 754.7 L592.8 751.5 L600.1 747.9 L607.7 744.1 L615.5 740.4 L623 736.8 L630 733.5 L636.5 730.5 L643 727.5 L649.4 724.5 L655.7 721.6 L662.2 718.7 L668.6 715.9 L675.2 713.1 L682 710.4 L689 707.7 L696.4 704.9 L703.9 702.2 L711.5 699.6 L719 697 L726.3 694.5 L733.2 692.2 L739.6 690 L745.3 688.1 L750.3 686.4 L754.8 684.9 L759.2 683.5 L763.6 682.1 L768.4 680.6 L773.7 678.9 L780 677 L787.3 674.8 L795.4 672.4 L804.2 669.9 L813.3 667.2 L822.5 664.6 L831.5 662 L840.1 659.4 L848 657 L854.9 654.9 L860.8 653.1 L866.1 651.4 L871.4 649.8 L877 647.9 L883.3 645.8 L890.8 643.2 L900 640 L911.3 636 L924.5 631.4 L939 626.2 L954.2 620.8 L969.5 615.3 L984.3 609.8 L998 604.7 L1010 600 L1020.4 595.7 L1029.9 591.6 L1038.5 587.7 L1046.6 583.9 L1054.1 580.3 L1061.2 576.7 L1068.1 573.3 L1075 570 L1081.4 567 L1086.9 564.3 L1092 561.9 L1096.8 559.6 L1101.7 557.1 L1107 554.4 L1113 551.3 L1120 547.5 L1128.1 543.1 L1136.9 538.1 L1146.4 532.7 L1156.4 527 L1166.5 521.2 L1176.6 515.3 L1186.5 509.6 L1196 504 L1205.6 498.3 L1215.8 492.2 L1226.1 485.9 L1236.2 479.8 L1245.8 474 L1254.4 468.7 L1261.6 464.3 L1267 461" stroke="#2fc4e8" fill="none" stroke-width="1.3"/><path d="M938 316 L941.9 319 L947.4 323.3 L953.8 328.2 L960 333 L965.8 337.4 L971.6 341.8 L977.9 346.6 L985 352 L993.6 358.6 L1003.4 366.1 L1012.9 373.5 L1021 380 L1027 385.2 L1031.8 389.7 L1035.9 393.8 L1040 398 L1044.1 402.4 L1047.9 406.7 L1051.5 410.9 L1055 415 L1058.4 418.8 L1061.7 422.5 L1064.8 426.1 L1067.5 430 L1069.8 434.3 L1071.7 438.9 L1073.4 443.4 L1075 447.5 L1076 450.7 L1076.6 453.4 L1077.6 456.3 L1080 460 L1084.7 465.1 L1091 471.1 L1097.4 477.2 L1102.5 482.5 L1105.7 486.6 L1107.8 490 L1109.4 493.4 L1111 497.5 L1112.5 502.5 L1113.8 508.1 L1115 514 L1116 520 L1116.9 526.6 L1117.8 533.8 L1118.4 540.3 L1119 545 L1119.4 547.3 L1119.7 547.8 L1119.9 547.6 L1120 547.5" stroke="#2fc4e8" fill="none" stroke-width="1.1"/><path d="M618.7 638.1 L630.1 630.7 L642 623.1 L654.2 615.2 L666.3 607.3 L678.4 599.5 L690 592 L701.4 584.7 L712.9 577.3 L724.3 570 L735.8 562.7 L747.1 555.4 L758.2 548.2 L769.2 541.1 L780 534 L790.1 527.3 L799.3 521 L808.1 514.9 L816.9 508.8 L826 502.4 L836 495.7 L847.2 488.3 L860 480 L874.4 470.9 L890.1 461 L906.8 450.6 L924.4 439.7 L942.7 428.5 L961.5 417 L980.7 405.5 L1000 394 L1021 381.7 L1044.4 368.2 L1069 354.2 L1093.8 340.1 L1117.4 326.8 L1138.8 314.7 L1156.7 304.6 L1170 297" stroke="#2fc4e8" fill="none" stroke-width="1.1"/><path d="M540 684 L544.2 681.6 L549.6 678.7 L556 675.2 L563.2 671.2 L571.2 666.7 L579.8 661.9 L588.7 656.6 L598 651 L607.9 644.9 L618.7 638.1" stroke="#2fc4e8" fill="none" stroke-width="1.1" stroke-dasharray="1 3"/><path d="M449.700 735.300L540 684.400" stroke="#2fc4e8" fill="none" stroke-width="1.1"/><path d="M415 741L437 730" stroke="#2fc4e8" fill="none" stroke-width="1.1"/><path d="M485 808L575 762" stroke="#2fc4e8" fill="none" stroke-width="1.1"/><path d="M414.5 738.5L485 810" stroke="#2fc4e8" fill="none" stroke-width="1.1"/><path d="M348 604 L545 800 L552 947 L357 747 Z" stroke="#868686" fill="none" stroke-width=".9" opacity=".85"/><path d="M441 552 L636 747 L645 896 L450 700 Z" stroke="#868686" fill="none" stroke-width=".9" opacity=".85"/><path d="M924 280 L1120 477 L1128 622 L933 427 Z" stroke="#868686" fill="none" stroke-width=".9" opacity=".85"/><path d="M1072 196 L1266 391 L1275 538 L1080 344 Z" stroke="#868686" fill="none" stroke-width=".9" opacity=".85"/><path d="M348 681 L1080 268 L1275 463 L547 877 Z" stroke="#4e3038" fill="none" stroke-width=".9"/><path d="M443 700 L1171 292 L1182 439 L452 852 Z" stroke="#4e3038" fill="none" stroke-width=".9"/><path d="M1176 368L1174 345M1176 368L1205 347M1176 368L1192 386" stroke="#6e4040" stroke-width="1" fill="none"/><path d="M1173 352l2 9l2-9zM1188 357l9-5l-7 8zM1183 378l8 7l-10-3z" fill="#8a5a5a"/><path d="M810 572L810 557" stroke="#35c030" stroke-width="1.2"/><path d="M810 572L830 562" stroke="#e04848" stroke-width="1.2"/><path d="M810 572L825 586" stroke="#35c8e8" stroke-width="1.2"/><rect x="807.500" y="553" width="5" height="5" fill="#2fd02f"/><circle cx="831" cy="561" r="2.500" fill="#e04858"/><circle cx="826" cy="586.500" r="2.800" fill="#35c8f0"/><text transform="translate(1072 196) scale(0.62 1)" font-size="16" font-weight="200" fill="#4e3030" stroke="#4e3030" stroke-width=".4" textLength="55.6452" lengthAdjust="spacing">DTM3</text><text transform="translate(924 280) scale(0.62 1)" font-size="16" font-weight="200" fill="#4e3030" stroke="#4e3030" stroke-width=".4" textLength="55.6452" lengthAdjust="spacing">DTM4</text><text transform="translate(1081 268) scale(0.62 1)" font-size="16" font-weight="200" fill="#4e3030" stroke="#4e3030" stroke-width=".4" textLength="37.9032" lengthAdjust="spacing">TOP</text><text transform="translate(1066 381) scale(0.62 1)" font-size="16" font-weight="200" fill="#4e3030" stroke="#4e3030" stroke-width=".4" textLength="168.548" lengthAdjust="spacing">PRT_CSYS_DEF</text><text transform="translate(1277 540) scale(0.62 1)" font-size="16" font-weight="200" fill="#4e3030" stroke="#4e3030" stroke-width=".4" textLength="68.5484" lengthAdjust="spacing">RIGHT</text><text transform="translate(357 753) scale(0.62 1)" font-size="16" font-weight="200" fill="#4e3030" stroke="#4e3030" stroke-width=".4" textLength="54.0323" lengthAdjust="spacing">DTM1</text><text transform="translate(450 699) scale(0.62 1)" font-size="16" font-weight="200" fill="#4e3030" stroke="#4e3030" stroke-width=".4" textLength="55.6452" lengthAdjust="spacing">DTM2</text><text transform="translate(442 705) scale(0.62 1)" font-size="16" font-weight="200" fill="#4e3030" stroke="#4e3030" stroke-width=".4" textLength="68.5484" lengthAdjust="spacing">FRONT</text><text transform="translate(1161 343) scale(0.62 1)" font-size="14" font-weight="200" fill="#222" stroke="#222" stroke-width=".4" textLength="12.0968" lengthAdjust="spacing">Y</text><text transform="translate(1205 350) scale(0.62 1)" font-size="14" font-weight="200" fill="#222" stroke="#222" stroke-width=".4" textLength="12.0968" lengthAdjust="spacing">X</text><text transform="translate(1196 402) scale(0.62 1)" font-size="14" font-weight="200" fill="#222" stroke="#222" stroke-width=".4" textLength="12.0968" lengthAdjust="spacing">Z</text></svg></div>
<div class="abs" style="left:1415px;top:427px;width:33px;height:321px;background:#f1f1f2;border:1px solid #a9a9a9"></div>
<div class="abs" style="left:1419px;top:693px;width:24px;height:25px;background:#dcdcdc;border:1px solid #b9b9b9"></div>
<div class="abs" style="left:1419px;top:721px;width:24px;height:25px;background:#dcdcdc;border:1px solid #b9b9b9"></div>
<div class="i" style="left:1422px;top:433px;width:18px;height:18px;"><svg width="18" height="18" viewBox="0 0 18 18"><rect x="1.500" y="1.500" width="14" height="12" fill="#fdfdfd" stroke="#8c8c8c"/><circle cx="8.5" cy="8" r="4.2" fill="#e8f6fc" stroke="#2a7fa6" stroke-width="1.300"/><path d="M11.8 11.5L16 16" stroke="#9a9a9a" stroke-width="2.400" stroke-linecap="round"/></svg></div>
<div class="i" style="left:1422px;top:459.4px;width:18px;height:18px;"><svg width="18" height="18" viewBox="0 0 18 18"><circle cx="7.5" cy="7.5" r="5.2" fill="#e8f6fc" stroke="#2a7fa6" stroke-width="1.300"/><path d="M11.5 11.5L16.5 16.5" stroke="#9a9a9a" stroke-width="2.400" stroke-linecap="round"/><path d="M4.500 7.500H10.500M7.500 4.500V10.500" stroke="#1f5f8f" stroke-width="1.800"/></svg></div>
<div class="i" style="left:1422px;top:485.8px;width:18px;height:18px;"><svg width="18" height="18" viewBox="0 0 18 18"><circle cx="7.5" cy="7.5" r="5.2" fill="#e8f6fc" stroke="#2a7fa6" stroke-width="1.300"/><path d="M11.5 11.5L16.5 16.5" stroke="#9a9a9a" stroke-width="2.400" stroke-linecap="round"/><path d="M4.500 7.500H10.500" stroke="#1f5f8f" stroke-width="1.800"/></svg></div>
<div class="i" style="left:1422px;top:512.2px;width:18px;height:18px;"><svg width="18" height="18" viewBox="0 0 18 18"><defs><linearGradient id="gvr" x1="0" y1="0" x2="1" y2="1"><stop offset="0" stop-color="#f4fbfe"/><stop offset="1" stop-color="#7fcbe6"/></linearGradient></defs><rect x="1.500" y="1.500" width="15" height="15" fill="url(#gvr)" stroke="#8c8c8c"/><path d="M4 15.500L15.500 4" stroke="#1f5f8f" stroke-width="2"/><path d="M2 16L7 14L4 11Z" fill="#333"/></svg></div>
<div class="i" style="left:1422px;top:538.6px;width:18px;height:18px;"><svg width="18" height="18" viewBox="0 0 18 18"><defs><radialGradient id="gvs" cx=".35" cy=".3" r=".8"><stop offset="0" stop-color="#ffffff"/><stop offset=".55" stop-color="#bdbdbd"/><stop offset="1" stop-color="#6a6a6a"/></radialGradient></defs><circle cx="11.500" cy="6" r="4.500" fill="url(#gvs)"/><circle cx="6.500" cy="11" r="5" fill="url(#gvs)"/><path d="M17.500 13.500V17.500H13.500Z" fill="#444"/></svg></div>
<div class="i" style="left:1422px;top:565px;width:18px;height:18px;"><svg width="18" height="18" viewBox="0 0 18 18"><path d="M2 5.500L5.500 2H16V12.500L12.500 16H2Z" fill="#8fd3ea" stroke="#3a9cc4"/><path d="M2 5.500H12.500V16H2Z" fill="#fdfdfd" stroke="#5fb4d4"/><path d="M12.500 5.500L16 2" stroke="#3a9cc4"/><path d="M17.500 13.500V17.500H13.500Z" fill="#444"/></svg></div>
<div class="i" style="left:1422px;top:591.4px;width:18px;height:18px;"><svg width="18" height="18" viewBox="0 0 18 18"><path d="M2 5L5 2H14.500V11.500L11.500 14.500H2Z" fill="#b8e4f3" stroke="#5fb4d4"/><path d="M2 5H11.500V14.500H2Z" fill="#fdfdfd" stroke="#7fc4de"/><rect x="9.500" y="8.500" width="7" height="8" fill="#fff" stroke="#666"/><path d="M11 11H15M11 13H15M11 15H15" stroke="#777" stroke-width=".8"/><path d="M18 14V18H14Z" fill="#444"/></svg></div>
<div class="i" style="left:1422px;top:617.8px;width:18px;height:18px;"><svg width="18" height="18" viewBox="0 0 18 18"><rect x="1.500" y="1.500" width="12" height="13" fill="#fff" stroke="#777"/><path d="M1.500 5H13.500M1.500 8H13.500M1.500 11H13.500M5 1.500V14.500" stroke="#888" stroke-width=".8"/><rect x="7" y="9.500" width="10.500" height="7.500" rx="1" fill="#2e2e2e"/><rect x="10" y="8" width="4" height="2" fill="#2e2e2e"/><circle cx="12.200" cy="13.300" r="2.300" fill="#ddd" stroke="#888"/></svg></div>
<div class="i" style="left:1422px;top:644.2px;width:18px;height:18px;"><svg width="18" height="18" viewBox="0 0 18 18"><path d="M1.500 5L6 2.500L17 4L16 13L11 16.500L2.500 14Z" fill="#bfe6f3" stroke="#4a9fc2"/><path d="M1.500 5L12 6.500L11 16.500M12 6.500L17 4" stroke="#4a9fc2" fill="none"/><path d="M6 2.500L6.500 11L2.500 14M6.500 11L16 13" stroke="#7fc4de" fill="none" stroke-width=".8"/></svg></div>
<div class="i" style="left:1422px;top:670.6px;width:18px;height:18px;"><svg width="18" height="18" viewBox="0 0 18 18"><path d="M1.500 1.500L5 5M5 1.500L1.500 5" stroke="#8d6a3a" stroke-width="1.300"/><path d="M7.500 4L10 .5M3 16L8 8" stroke="#8d6a3a" stroke-width="1.400" stroke-dasharray="3 1.500"/><path d="M11 6.500V13.500H17M11 13.500L7.500 17" stroke="#8d6a3a" stroke-width="1.200" fill="none"/><path d="M10 8L11 6L12 8M15.500 12.500L17.200 13.500L15.500 14.500" stroke="#8d6a3a" fill="none" stroke-width=".9"/><path d="M18 14.500V18H14.500Z" fill="#444"/></svg></div>
<div class="i" style="left:1422px;top:697px;width:18px;height:18px;"><svg width="18" height="18" viewBox="0 0 18 18"><rect x="1.500" y="2.500" width="9" height="6" fill="#fff6dc" stroke="#8a7a4a"/><path d="M11 4H15.500V9" stroke="#333" stroke-width="1.400" fill="none"/><path d="M13.300 8L15.500 11L17.700 8Z" fill="#333"/><path d="M7.500 14C9.500 11.500 13.500 11.500 15.500 14C13.500 16.500 9.500 16.500 7.500 14Z" fill="#fff" stroke="#333"/><circle cx="11.500" cy="14" r="1.500" fill="#333"/></svg></div>
<div class="i" style="left:1422px;top:723.4px;width:18px;height:18px;"><svg width="18" height="18" viewBox="0 0 18 18"><path d="M5 3.500L9 10L15 7M9 10L5.500 15.500" stroke="#666" stroke-width="1.200" fill="none"/><circle cx="4.500" cy="3" r="2" fill="#3aa657" stroke="#237a3a" stroke-width=".6"/><circle cx="15.500" cy="6.500" r="2" fill="#e0604a" stroke="#a03a2a" stroke-width=".6"/><circle cx="5" cy="15.500" r="2.200" fill="#4a9fd0" stroke="#2a6f9a" stroke-width=".6"/></svg></div>
<div class="t " style="left:308px;top:896px;font-size:8px;color:#555;font-family:'Liberation Serif','Noto Serif CJK SC',serif">插入模式</div>
<div class="abs" style="left:4px;top:1001px;width:1449px;height:2px;background:#a9a9a9"></div>
<div id="status" class="abs"></div>
<div class="abs" style="left:10px;top:1010px;width:22px;height:22px;background:#dedede;border:1px solid #c2c2c2"></div>
<div class="i" style="left:15px;top:1012px;width:12px;height:18px;"><svg width="12" height="18" viewBox="0 0 14 18"><path d="M3.500 5V15H6M3.500 10H9" stroke="#333" fill="none"/><rect x="1.500" y="1.500" width="4" height="4" fill="#fff" stroke="#333" stroke-width="1.2"/><rect x="1.500" y="12.500" width="4" height="4" fill="#fff" stroke="#333" stroke-width="1.2"/><rect x="8.500" y="7.500" width="4" height="4" fill="#fff" stroke="#333" stroke-width="1.2"/></svg></div>
<div class="i" style="left:38px;top:1011px;width:20px;height:20px;"><svg width="20" height="20" viewBox="0 0 20 20"><defs><radialGradient id="ggl" cx=".4" cy=".35" r=".7"><stop offset="0" stop-color="#a8dcf5"/><stop offset="1" stop-color="#2a7fc0"/></radialGradient></defs><circle cx="10" cy="10" r="7" fill="url(#ggl)" stroke="#2a6fa8" stroke-width=".8"/><path d="M5 7C8 5 12 5 15 7M4 11C8 9.500 12 9.500 16 11M10 3C7 7 7 13 10 17M10 3C13 7 13 13 10 17" stroke="#cfe8f6" stroke-width=".8" fill="none"/><ellipse cx="10" cy="10" rx="9.500" ry="4" fill="none" stroke="#555" stroke-width="1.400" transform="rotate(-35 10 10)"/></svg></div>
<div class="i" style="left:64px;top:1012px;width:18px;height:18px;"><svg width="18" height="18" viewBox="0 0 18 18"><defs><linearGradient id="gsq" x1="0" y1="0" x2="1" y2="1"><stop offset="0" stop-color="#ffffff"/><stop offset="1" stop-color="#d5dde2"/></linearGradient></defs><rect x="1" y="1" width="16" height="16" fill="url(#gsq)" stroke="#3a8fb5" stroke-width="1.300"/></svg></div>
<div class="sep" style="left:93px;top:1008px;height:24px;background:#c4c4c4"></div>
<div class="abs" style="left:100px;top:1016px;width:5px;height:5px;border-radius:3px;background:#2f6b86"></div>
<div class="t " style="left:110px;top:1011px;color:#3a3a3a;font-size:11px;letter-spacing:-.5px">莲花头 重新生成已完成，11 个隐含的特征或元件。</div>
<div class="sep" style="left:1072px;top:1005px;height:27px;background:#cfcfcf"></div>
<div class="abs" style="left:1115px;top:1005px;width:45px;height:27px;background:#f7f7f7;border:1px solid #d0d0d0"></div>
<div class="sep" style="left:1143px;top:1006px;height:25px;background:#d6d6d6"></div>
<div class="i" style="left:1121px;top:1010px;width:18px;height:18px;"><svg width="18" height="18" viewBox="0 0 18 18"><defs><linearGradient id="gbn" x1="0" y1="0" x2="1" y2="0"><stop offset="0" stop-color="#444"/><stop offset=".5" stop-color="#aaa"/><stop offset="1" stop-color="#3a3a3a"/></linearGradient></defs><path d="M2 15V8L4 3H7.500V15ZM16 15V8L14 3H10.500V15Z" fill="url(#gbn)"/><rect x="7" y="6" width="4" height="4" fill="#555"/><rect x="3.500" y="1.500" width="4" height="2" fill="#444"/><rect x="10.500" y="1.500" width="4" height="2" fill="#444"/></svg></div>
<div class="arr" style="left:1146px;top:1017px"></div>
<div class="abs" style="left:1258px;top:1007px;width:177px;height:25px;background:#f9f9f9;border:1px solid #cdcdcd"></div>
<div class="sep" style="left:1419px;top:1008px;height:23px;background:#d6d6d6"></div>
<div class="t " style="left:1266px;top:1012px;font-size:11px;color:#444">几何</div>
<div class="arr" style="left:1423px;top:1018px"></div>
<svg class="abs" style="left:1438px;top:1022px" width="13" height="13"><path d="M12 2L2 12M12 6L6 12M12 10L10 12" stroke="#b5b5b5" stroke-width="1.3"/></svg>
<div class="t" style="left:1195px;top:970px;height:44px;line-height:44px;font-size:35px;font-weight:500;color:#fff;text-shadow:2px 2px 0 #000,1px 1px 0 #000,2px 1px 0 #000,1px 2px 0 #000;letter-spacing:1.8px">头条 @钟日铭</div>
</div></body></html>
